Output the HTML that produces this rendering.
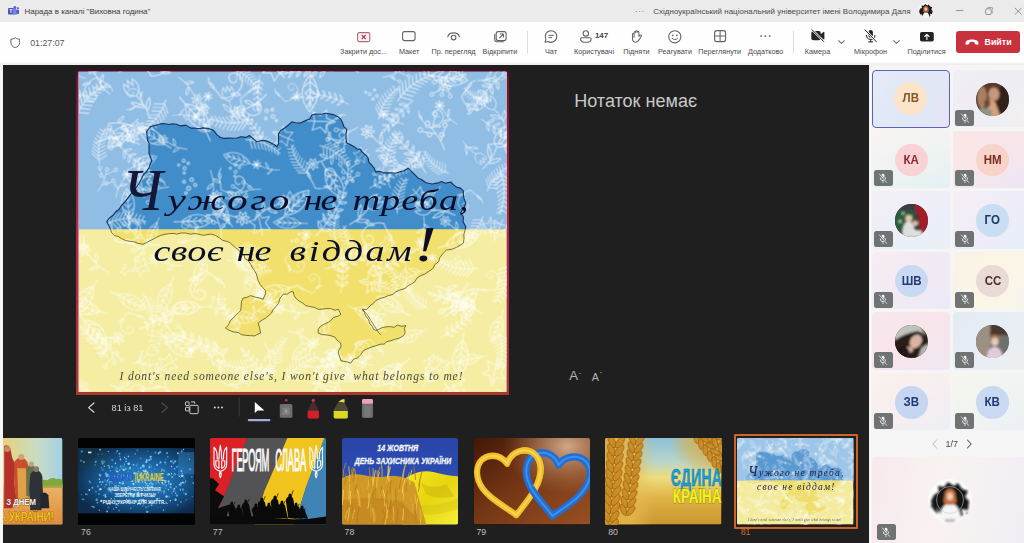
<!DOCTYPE html>
<html lang="uk">
<head>
<meta charset="utf-8">
<title>Нарада в каналі "Виховна година"</title>
<style>
*{box-sizing:border-box;margin:0;padding:0}
html,body{width:1024px;height:543px;overflow:hidden;background:#f5f5f5;font-family:"Liberation Sans",sans-serif;}
.abs{position:absolute}
#titlebar{z-index:2;position:absolute;left:0;top:0;width:1024px;height:21.500px;background:#ebebeb;color:#3b3b3b;font-size:7.95px;}
#titlebar .t{position:absolute;top:1px;line-height:21px;white-space:nowrap}
#toolbar{position:absolute;left:0;top:21px;width:1024px;height:44px;background:linear-gradient(#f3f3f3 0,#fefefe 1.500px,#fefefe 40.500px,#ececec 44px);}
.tb{position:absolute;top:0;height:44px;}
.tb .lbl{position:absolute;top:25.5px;left:50%;transform:translateX(-50%);font-size:7.25px;color:#4a4a4a;white-space:nowrap;line-height:10px}
.tb svg{position:absolute;overflow:visible}
.sep{position:absolute;top:9.5px;width:1px;height:22px;background:#dcdcdc}
#stage{position:absolute;left:3px;top:65px;width:865.5px;height:478px;background:#1f1f1f;overflow:hidden}
#side{position:absolute;left:868.5px;top:65px;width:155.5px;height:478px;background:#f5f5f5;overflow:hidden}
.tile{position:absolute;width:78.2px;height:57.400px;border-radius:4px;overflow:hidden}
.av{position:absolute;width:32.600px;height:32.600px;border-radius:50%;left:23.400px;top:13px;font-size:12.400px;font-weight:bold;text-align:center;line-height:33.400px;overflow:hidden}
.av span{display:inline-block;transform:scaleX(.93)}
.mic{position:absolute;left:2.600px;top:39.800px;width:18.500px;height:16px;border-radius:2.500px;background:#6f7373}
.mic svg{position:absolute;left:4.200px;top:2.800px}
.thumb{position:absolute;top:373.3px;width:116.4px;height:86.4px;border-radius:2px;overflow:hidden;background:#000}
.tn{position:absolute;top:461.900px;font-size:8.800px;color:#bdbdbd;line-height:10px}
</style>
</head>
<body>
<!-- TITLE BAR -->
<div id="titlebar">
  <svg class="abs" style="left:7.600px;top:5.600px" width="11.500" height="10.500" viewBox="0 0 12 11"><rect x="0" y="2.2" width="6.2" height="6.6" rx="1" fill="#4b53bc"/><rect x="5" y="3.2" width="4.4" height="6" rx="1.2" fill="#7b83eb"/><circle cx="7.2" cy="1.7" r="1.6" fill="#5b63d3"/><rect x="8.8" y="3.8" width="3" height="4.6" rx="1.2" fill="#5059c9"/><circle cx="10.4" cy="2.4" r="1.1" fill="#5059c9"/><text x="3.100" y="7.800" font-family="'Liberation Sans',sans-serif" font-weight="bold" font-size="5.500" fill="#fff" text-anchor="middle">T</text></svg>
  <span class="t" style="left:24.5px">Нарада в каналі "Виховна година"</span>
  <span class="t" style="left:635px;letter-spacing:.6px;color:#555">···</span>
  <span class="t" style="left:653.3px;letter-spacing:.035px;color:#4a4a4a">Східноукраїнський національний університет імені Володимира Даля</span>
  <div class="abs" style="left:917.600px;top:2.600px;width:15.800px;height:15.800px;border-radius:50%;overflow:hidden;background:#f4f4f4"><svg width="15.800" height="15.800" viewBox="0 0 44 44" style="display:block"><path d="M6 16L3 22L5 30L10 35L9 28L14 38L18 41L16 34L22 30L30 36L27 41L35 36L33 30L40 31L41 22L37 18L40 12L34 10L30 4L26 7L20 3L16 8L10 7L11 13Z" fill="#1c1a1a"/><path d="M13 42Q13 26 22 25Q31 26 32 42Z" fill="#f6f6f6"/><path d="M15 12Q22 3 29 12L30 24L25 27H19L14 24Z" fill="#b05a34"/><ellipse cx="22" cy="17" rx="4" ry="5" fill="#efc8b0"/></svg></div>
  <svg class="abs" style="left:955.700px;top:9.800px" width="8" height="1.200" viewBox="0 0 8 1.200"><rect width="7.400" height=".9" fill="#8a8a8a"/></svg>
  <svg class="abs" style="left:984.600px;top:6.500px" width="8.600" height="8.600" viewBox="0 0 7 7"><rect x=".5" y="1.500" width="4.600" height="4.600" rx="1" fill="none" stroke="#8a8a8a" stroke-width=".75"/><path d="M1.800 1.200 Q2 .5 2.800 .5 H5.300 Q6.500 .5 6.500 1.700 V4 Q6.500 4.800 5.800 5" fill="none" stroke="#8a8a8a" stroke-width=".75"/></svg>
  <svg class="abs" style="left:1014.200px;top:6.500px" width="8.400" height="8.400" viewBox="0 0 8 8"><path d="M.8 .8 L7.200 7.200 M7.200 .8 L.8 7.200" stroke="#8a8a8a" stroke-width=".9"/></svg>
</div>

<!-- TOOLBAR -->
<div id="toolbar">
  <svg class="abs" style="left:9.600px;top:15.600px" width="10.600" height="11.400" viewBox="0 0 12 13"><path d="M6 .8 C4.4 2 2.8 2.5 1 2.6 V6.2 C1 9.2 3 11.2 6 12.2 C9 11.2 11 9.2 11 6.200 V2.6 C9.2 2.5 7.600 2 6 .8 Z" fill="none" stroke="#5a5a5a" stroke-width="1.1" stroke-linejoin="round"/></svg>
  <span class="abs" style="left:30.200px;top:15.700px;font-size:8.800px;color:#5a5a5a;line-height:12px">01:27:07</span>
  <!-- Close doc -->
  <div class="tb" style="left:340px;width:47px"><svg style="left:17px;top:10.6px" width="13.4" height="10.2" viewBox="0 0 13.4 10.2"><rect x=".6" y=".6" width="12.2" height="9" rx="1.6" fill="#fbeff1" stroke="#b46a7a" stroke-width="1.1"/><path d="M4.700 3 L8.700 7.200 M8.700 3 L4.700 7.200" stroke="#8e4254" stroke-width="1.100"/></svg><span class="lbl">Закрити дос...</span></div>
  <!-- Layout -->
  <div class="tb" style="left:389.200px;width:40px"><svg style="left:13.1px;top:10.3px" width="13.700" height="10.2" viewBox="0 0 13.7 10.2"><rect x=".6" y=".6" width="12.5" height="9" rx="2" fill="none" stroke="#636363" stroke-width="1.1"/></svg><span class="lbl">Макет</span></div>
  <!-- Private view -->
  <div class="tb" style="left:431.500px;width:44px"><svg style="left:15.3px;top:11px" width="13.200" height="8.6" viewBox="0 0 13.2 8.6"><path d="M.8 4.600 C2.200 -.4 11 -.4 12.4 4.600" fill="none" stroke="#636363" stroke-width="1.1" stroke-linecap="round"/><circle cx="6.6" cy="5.600" r="2.300" fill="none" stroke="#636363" stroke-width="1.1"/></svg><span class="lbl">Пр. перегляд</span></div>
  <!-- Pop out -->
  <div class="tb" style="left:481px;width:38px"><svg style="left:12.700px;top:9.700px" width="12.700" height="11.400" viewBox="0 0 12.7 11.4"><rect x="2.2" y=".6" width="9.9" height="9" rx="2" fill="none" stroke="#636363" stroke-width="1.1"/><path d="M.7 3.200 V8.6 Q.7 10.800 2.9 10.800 H9.400" fill="none" stroke="#636363" stroke-width="1.1" stroke-linecap="round"/><path d="M5.600 6.900 L9.200 3.300 M6.400 3.100 H9.400 V6.100" fill="none" stroke="#636363" stroke-width="1.050" stroke-linecap="round" stroke-linejoin="round"/></svg><span class="lbl">Відкріпити</span></div>
  <div class="sep" style="left:526.5px"></div>
  <!-- Chat -->
  <div class="tb" style="left:536px;width:30px"><svg style="left:8.400px;top:9px" width="13.600" height="13" viewBox="0 0 13.6 13"><path d="M7 .7 A5.800 5.800 0 1 1 4.100 11.5 L1 12.300 L1.900 9.300 A5.800 5.800 0 0 1 7 .7 Z" fill="none" stroke="#636363" stroke-width="1.100" stroke-linejoin="round"/><path d="M4.800 5.300 H9.300 M4.800 7.600 H7.600" stroke="#636363" stroke-width="1" stroke-linecap="round"/></svg><span class="lbl">Чат</span></div>
  <!-- People -->
  <div class="tb" style="left:573px;width:42px"><svg style="left:6.600px;top:9px" width="11.700" height="13" viewBox="0 0 11.7 13"><circle cx="5.850" cy="3.400" r="2.700" fill="none" stroke="#636363" stroke-width="1.100"/><path d="M1.700 7.800 H10 Q11.100 7.800 11.100 8.900 C11.100 11.200 8.800 12.300 5.850 12.300 C2.900 12.300 .6 11.200 .6 8.900 Q.6 7.800 1.700 7.800 Z" fill="none" stroke="#636363" stroke-width="1.100"/></svg><span class="abs" style="left:22px;top:10px;font-size:8.100px;font-weight:bold;color:#424242;line-height:10px;letter-spacing:-.15px">147</span><span class="lbl">Користувачі</span></div>
  <!-- Raise -->
  <div class="tb" style="left:621.400px;width:30px"><svg style="left:9.600px;top:9px" width="11" height="13" viewBox="0 0 11 13"><path d="M3.100 7.300 V2.600 Q3.100 1.700 3.900 1.700 Q4.700 1.700 4.700 2.600 V1.600 Q4.700 .7 5.500 .7 Q6.300 .7 6.300 1.600 V2.300 Q6.300 1.500 7.100 1.500 Q7.900 1.500 7.900 2.400 V6.300 L9 5.200 Q9.700 4.600 10.200 5.200 Q10.600 5.700 10.100 6.400 L8.300 9.600 Q6.900 12.300 4.900 12.300 Q1.500 12.300 1.500 8.800 V4.300 Q1.500 3.500 2.300 3.500 Q3.100 3.500 3.100 4.300" fill="none" stroke="#636363" stroke-width="1.050" stroke-linejoin="round" stroke-linecap="round"/></svg><span class="lbl">Підняти</span></div>
  <!-- React -->
  <div class="tb" style="left:658px;width:34px"><svg style="left:10.400px;top:9px" width="13.600" height="13.600" viewBox="0 0 13.6 13.6"><circle cx="6.800" cy="6.800" r="6.100" fill="none" stroke="#636363" stroke-width="1.100"/><circle cx="4.700" cy="5.300" r=".85" fill="#636363"/><circle cx="8.900" cy="5.300" r=".85" fill="#636363"/><path d="M4 8.300 Q6.800 11.200 9.600 8.300" fill="none" stroke="#636363" stroke-width="1" stroke-linecap="round"/></svg><span class="lbl">Реагувати</span></div>
  <!-- View -->
  <div class="tb" style="left:698px;width:43.400px"><svg style="left:15.800px;top:9px" width="12.200" height="12.200" viewBox="0 0 12.2 12.2"><rect x=".6" y=".6" width="11" height="11" rx="2.300" fill="none" stroke="#636363" stroke-width="1.100"/><path d="M6.100 .6 V11.600 M.6 6.100 H11.600" stroke="#636363" stroke-width="1.050"/></svg><span class="lbl">Переглянути</span></div>
  <!-- More -->
  <div class="tb" style="left:747.700px;width:36px"><svg style="left:12.600px;top:14px" width="10.800" height="2.200" viewBox="0 0 10.8 2.2"><circle cx="1.100" cy="1.100" r=".95" fill="#636363"/><circle cx="5.400" cy="1.100" r=".95" fill="#636363"/><circle cx="9.700" cy="1.100" r=".95" fill="#636363"/></svg><span class="lbl">Додатково</span></div>
  <div class="sep" style="left:793px"></div>
  <!-- Camera -->
  <div class="tb" style="left:804.500px;width:26px"><svg style="left:6.200px;top:8.400px" width="14.200" height="13.200" viewBox="0 0 14.2 13.2"><path d="M2.400 2.100 H7.700 Q9.800 2.100 9.800 4.200 V5.200 L12.400 3 Q13.400 2.400 13.400 3.600 V9.800 Q13.400 11 12.400 10.400 L9.800 8.200 V9.200 Q9.800 11.300 7.700 11.300 H2.400 Q.3 11.300 .3 9.200 V4.200 Q.3 2.100 2.400 2.100 Z" fill="#242424"/><path d="M1.200 .8 L12.800 12.600" stroke="#fdfdfd" stroke-width="2.200"/><path d="M1.200 .8 L12.800 12.600" stroke="#242424" stroke-width="1" stroke-linecap="round"/></svg><span class="lbl">Камера</span></div>
  <svg class="abs" style="left:838.400px;top:19.100px" width="7" height="4" viewBox="0 0 7 4"><path d="M.4 .4 L3.500 3.400 L6.600 .4" fill="none" stroke="#707070" stroke-width="1.050"/></svg>
  <!-- Mic -->
  <div class="tb" style="left:853px;width:35px"><svg style="left:11.200px;top:8.400px" width="13.400" height="13.800" viewBox="0 0 13.4 13.800"><rect x="4.500" y="1" width="4.400" height="7.600" rx="2.200" fill="#242424"/><path d="M2.500 6.400 Q2.500 10.400 6.700 10.400 Q10.900 10.400 10.900 6.400 M6.700 10.400 V12.900 M4.700 12.900 H8.700" fill="none" stroke="#242424" stroke-width="1" stroke-linecap="round"/><path d="M1 .8 L12.400 12.800" stroke="#fdfdfd" stroke-width="2.200"/><path d="M1 .8 L12.400 12.800" stroke="#242424" stroke-width="1" stroke-linecap="round"/></svg><span class="lbl">Мікрофон</span></div>
  <svg class="abs" style="left:892.600px;top:19.100px" width="7" height="4" viewBox="0 0 7 4"><path d="M.4 .4 L3.500 3.400 L6.600 .4" fill="none" stroke="#707070" stroke-width="1.050"/></svg>
  <!-- Share -->
  <div class="tb" style="left:907.500px;width:38px"><svg style="left:12.200px;top:10.600px" width="13.800" height="9.600" viewBox="0 0 13.8 9.6"><rect x="0" y="0" width="13.800" height="9.600" rx="1.800" fill="#242424"/><path d="M6.900 7.400 V2.600 M4.800 4.500 L6.900 2.400 L9 4.500" fill="none" stroke="#fff" stroke-width="1.100" stroke-linecap="round" stroke-linejoin="round"/></svg><span class="lbl">Поділитися</span></div>
  <!-- Leave -->
  <div class="abs" style="left:955.800px;top:10.300px;width:64px;height:21.400px;border-radius:3px;background:#c9313d"><svg class="abs" style="left:9.600px;top:7.400px" width="14" height="6.400" viewBox="0 0 14 6.4"><path d="M.5 4 C.5 -.6 13.500 -.6 13.500 4 V5 Q13.500 6 12.600 5.800 L10.400 5.300 Q9.700 5.100 9.700 4.400 V3.400 C8 2.700 6 2.700 4.300 3.400 V4.400 Q4.300 5.100 3.600 5.300 L1.400 5.800 Q.5 6 .5 5 Z" fill="#fff"/></svg><span class="abs" style="left:28.700px;top:5.400px;font-size:8.900px;font-weight:bold;color:#fff;line-height:11px">Вийти</span></div>
</div>

<!-- STAGE -->
<div id="stage">
  <!--SLIDE-START-->
<svg class="abs" style="left:72.5px;top:3.5px" width="433.5" height="326.0" viewBox="75.5 68.5 433.5 326.0" font-family="'Liberation Serif','DejaVu Serif',serif">
<defs><path id="m0" d="M0 0Q3 -20 0 -40M0.9 -7.1Q-0.9 -11.7 -5.7 -12.4Q-4 -7.8 0.9 -7.1M0.9 -7.1Q5.8 -7.8 7.5 -12.4Q2.6 -11.7 0.9 -7.1M1.4 -14.3Q-0.2 -18.6 -4.8 -19.2Q-3.2 -14.9 1.4 -14.3M1.4 -14.3Q5.9 -14.9 7.5 -19.2Q3 -18.6 1.4 -14.3M1.5 -21.4Q-0 -25.4 -4.2 -26Q-2.7 -22 1.5 -21.4M1.5 -21.4Q5.7 -22 7.2 -26Q3 -25.4 1.5 -21.4M1.2 -28.6Q-0.2 -32.3 -4.1 -32.8Q-2.7 -29.1 1.2 -28.6M1.2 -28.6Q5.1 -29.1 6.5 -32.8Q2.6 -32.3 1.2 -28.6M0.6 -35.7Q-0.7 -39.1 -4.3 -39.6Q-3 -36.2 0.6 -35.7M0.6 -35.7Q4.2 -36.2 5.4 -39.6Q1.8 -39.1 0.6 -35.7M0 -40Q2.1 -43.5 0 -47Q-2.1 -43.5 0 -40"/><path id="m1" d="M0 0Q12.6 -15 0 -30Q-12.6 -15 0 0M0 0V-27M0 -5.5L4.3 -9.5M0 -5.5L-4.3 -9.5M0 -11L3.6 -15M0 -11L-3.6 -15M0 -16.5L2.9 -20.5M0 -16.5L-2.9 -20.5M0 -22L2.2 -26M0 -22L-2.2 -26M0 0V7"/><path id="m2" d="M0 0Q-4 -14 0 -26M0 -30Q3 -27.6 6 -30Q3 -32.4 0 -30M0 -30Q-0 -26.2 3.7 -25.3Q3.7 -29.2 0 -30M0 -30Q-3 -27.6 -1.3 -24.2Q1.7 -26.5 0 -30M0 -30Q-3.7 -30.9 -5.4 -27.4Q-1.7 -26.5 0 -30M0 -30Q-1.7 -33.5 -5.4 -32.6Q-3.7 -29.1 0 -30M0 -30Q1.7 -33.5 -1.3 -35.8Q-3 -32.4 0 -30M0 -30Q3.7 -30.8 3.7 -34.7Q-0 -33.8 0 -30M-1.3 -30a1.3 1.3 0 1 0 2.6 0a1.3 1.3 0 1 0 -2.6 0M-1.5 -9Q-3.8 -13.7 -9.1 -13.9Q-6.7 -9.2 -1.5 -9M-1.5 -14Q3.7 -14.7 5.5 -19.6Q0.3 -18.9 -1.5 -14"/><path id="m3" d="M0 0Q2 -12 -2 -24M1 -8L9 -16M0 -15L-9 -22M-1 -20L6 -28M-3.8 -26a1.8 1.8 0 1 0 3.6 0a1.8 1.8 0 1 0 -3.6 0M8.2 -18a1.8 1.8 0 1 0 3.6 0a1.8 1.8 0 1 0 -3.6 0M-11.8 -24a1.8 1.8 0 1 0 3.6 0a1.8 1.8 0 1 0 -3.6 0M5.2 -30a1.8 1.8 0 1 0 3.6 0a1.8 1.8 0 1 0 -3.6 0M2.2 -12a1.8 1.8 0 1 0 3.6 0a1.8 1.8 0 1 0 -3.6 0M-6.8 -17a1.8 1.8 0 1 0 3.6 0a1.8 1.8 0 1 0 -3.6 0"/><path id="m4" d="M0 0Q-6 -18 2 -36M-1.1 -3.6l7.5 -5.3M-1.1 -3.6l-7.5 -5.3M-1.8 -7.2l7 -4.9M-1.8 -7.2l-7 -4.9M-2.3 -10.8l6.6 -4.6M-2.3 -10.8l-6.6 -4.6M-2.6 -14.4l6.1 -4.3M-2.6 -14.4l-6.1 -4.3M-2.5 -18l5.6 -3.9M-2.5 -18l-5.6 -3.9M-2.2 -21.6l5.1 -3.6M-2.2 -21.6l-5.1 -3.6M-1.5 -25.2l4.6 -3.2M-1.5 -25.2l-4.6 -3.2M-0.6 -28.8l4.2 -2.9M-0.6 -28.8l-4.2 -2.9M0.5 -32.4l3.7 -2.6M0.5 -32.4l-3.7 -2.6"/><path id="m5" d="M0 0C10 -4 16 -16 8 -22C2 -26 -4 -20 1 -16C4 -14 7 -16 6 -18M0 0C-6 -6 -14 -4 -16 -12M6 -6Q10.5 -4.9 13.6 -8.4Q9.1 -9.5 6 -6M-8 -5Q-9.9 -8.6 -14 -8.6Q-12.1 -5 -8 -5"/><path id="m6" d="M0 0Q3 -12 0 -22M0 -22C-7 -24 -7 -32 -4 -36L-2 -31L0 -37L2 -31L4 -36C7 -32 7 -24 0 -22M1 -6Q7.2 -8.7 8.7 -15.2Q2.6 -12.5 1 -6M1 -10Q-0.6 -16.5 -6.7 -19.2Q-5.2 -12.7 1 -10"/><path id="m7" d="M0 0V-6L-8 -4L-5 -11L-10 -16L-3 -16L0 -24L3 -16L10 -16L5 -11L8 -4L0 -6M0 -6V-20"/><path id="m8" d="M-1.5 0a1.5 1.5 0 1 0 3 0a1.5 1.5 0 1 0 -3 0M3.8 -3a1.2 1.2 0 1 0 2.4 0a1.2 1.2 0 1 0 -2.4 0M0.6 -7a1.4 1.4 0 1 0 2.8 0a1.4 1.4 0 1 0 -2.8 0M-5.1 -5a1.1 1.1 0 1 0 2.2 0a1.1 1.1 0 1 0 -2.2 0M-3 4a1 1 0 1 0 2 0a1 1 0 1 0 -2 0"/><path id="mapd" d="M146.1 131.3L147.9 128.8L150.0 126.0L154.7 124.9L157.5 124.2L161.2 123.0L164.3 123.2L169.0 124.0L171.6 123.2L176.2 123.8L179.7 125.4L185.4 124.6L190.4 127.6L193.7 127.5L198.7 128.3L202.3 127.4L207.9 128.0L212.5 129.5L214.3 131.4L216.5 134.4L220.0 137.0L223.9 137.9L228.2 137.6L232.2 137.7L236.3 137.5L240.4 136.2L245.7 136.9L248.8 135.0L253.3 138.6L256.3 141.3L259.3 140.5L262.6 139.9L266.4 140.6L270.3 142.3L273.8 144.2L276.4 146.3L278.2 142.9L278.0 138.0L278.0 133.4L280.2 130.0L284.8 127.0L288.7 124.0L291.4 121.3L294.8 122.2L300.0 122.6L305.1 120.0L309.0 118.5L311.5 114.5L315.1 113.5L321.5 113.8L325.0 112.6L328.4 113.3L332.5 114.1L337.6 116.3L340.4 118.7L342.1 122.4L343.4 126.2L346.3 128.8L345.5 133.7L345.5 137.8L346.3 142.6L349.1 143.7L354.2 146.4L356.1 148.2L360.0 148.9L361.9 151.6L365.8 155.1L367.6 157.7L368.6 162.2L370.7 164.0L373.7 167.6L375.0 171.4L378.6 170.7L382.2 172.1L386.6 172.4L390.9 172.3L395.2 172.7L400.4 171.0L403.7 170.2L407.7 167.7L410.3 170.3L415.3 175.1L417.7 177.7L420.5 178.7L425.0 182.0L427.8 182.7L431.6 183.5L437.6 182.4L441.1 181.1L444.8 182.8L450.3 181.5L452.8 184.1L456.0 186.6L459.9 187.6L462.8 190.2L462.9 194.9L463.5 197.9L465.3 202.7L463.8 206.8L462.2 208.8L460.3 212.6L462.9 216.5L462.6 221.2L465.3 226.3L464.6 229.4L463.3 234.2L463.6 237.7L462.8 242.6L458.5 245.5L455.9 246.9L451.2 248.8L446.0 249.6L442.8 252.6L439.2 257.3L438.2 261.2L434.2 264.2L432.8 267.7L428.6 270.7L424.0 273.8L420.2 275.2L416.2 277.8L414.6 281.0L411.6 283.0L408.0 285.0L404.4 288.0L399.3 289.6L395.4 291.3L392.3 293.9L387.2 295.4L384.2 296.7L379.7 298.0L375.4 300.0L373.0 302.8L369.4 305.4L367.8 307.6L365.8 309.0L361.6 308.8L363.8 311.7L365.0 315.0L367.9 318.8L369.5 323.1L372.0 326.0L372.8 328.6L375.4 330.1L377.7 329.1L382.0 327.0L385.4 326.4L389.8 326.1L393.7 326.8L396.9 324.5L401.0 325.8L405.4 325.1L403.9 327.7L404.6 332.2L402.9 335.2L398.6 337.7L394.2 338.9L390.4 340.2L386.0 341.3L383.6 343.6L380.0 343.7L375.4 345.2L371.4 346.5L366.2 348.5L362.8 350.2L360.4 354.1L357.0 357.4L352.9 358.8L350.3 362.7L346.9 361.4L343.0 360.8L340.3 360.2L339.3 356.4L337.8 352.7L338.2 350.1L340.5 345.9L340.3 342.7L336.0 339.2L334.5 336.7L330.3 335.2L326.6 334.5L321.5 334.1L317.7 332.6L317.7 328.9L319.8 325.9L323.9 323.5L327.9 321.7L330.3 320.1L332.8 317.0L337.3 315.8L340.3 313.9L339.3 311.7L337.8 308.8L334.5 309.8L330.2 308.1L325.7 308.1L320.6 308.7L317.7 308.8L314.0 306.9L308.9 306.0L305.2 305.1L302.3 302.6L298.8 300.7L295.2 297.6L293.7 295.1L292.7 291.3L290.3 291.2L287.0 293.5L282.7 293.8L279.4 297.9L278.0 303.0L275.2 306.3L272.4 309.3L271.0 312.6L268.6 314.7L265.1 317.6L261.7 319.5L257.6 322.6L258.9 326.6L259.6 329.7L260.1 332.6L256.1 334.3L254.5 335.4L250.1 335.2L245.8 334.9L241.0 334.2L237.8 332.0L232.6 331.4L227.9 329.4L225.0 327.6L227.6 324.9L230.0 319.9L232.6 317.6L235.8 314.1L238.3 311.9L240.1 310.1L240.6 306.6L241.0 301.0L242.6 297.6L246.4 296.8L250.1 295.1L255.0 296.7L259.4 297.6L262.6 298.8L264.8 293.5L265.1 290.1L262.0 286.8L259.6 283.9L257.6 280.0L256.7 276.7L255.9 273.5L253.9 270.0L251.4 266.4L250.5 264.2L247.6 260.0L244.4 258.1L243.6 254.7L240.0 252.0L237.7 249.0L235.1 247.3L232.5 245.0L229.2 242.0L226.5 241.0L221.8 239.7L218.6 237.0L215.0 235.0L211.1 233.7L206.5 234.1L203.1 234.9L197.3 233.5L192.8 233.1L190.0 233.7L185.0 232.5L180.8 232.5L176.0 233.6L173.4 232.9L168.9 233.1L163.5 234.0L160.0 235.0L156.0 236.8L150.9 239.6L146.0 242.1L142.5 243.8L137.3 242.8L133.2 241.2L129.4 240.8L125.0 240.0L121.0 238.1L117.6 235.9L113.8 235.0L111.2 232.2L110.0 228.8L108.4 225.1L106.2 221.2L108.6 217.7L112.5 214.8L115.6 210.8L118.4 208.9L121.0 205.0L124.9 200.9L126.6 198.6L130.0 194.0L132.2 191.3L136.6 185.7L138.6 182.7L140.5 179.3L143.0 174.0L146.0 171.0L148.5 167.2L150.1 162.8L151.2 160.0L150.1 157.1L148.4 152.7L148.6 150.0L148.5 147.6L148.6 142.5L147.0 140.0L146.6 136.2Z"/><clipPath id="cpi"><rect x="78.6" y="71.2" width="427.0" height="320.2"/></clipPath>
<clipPath id="cpt"><rect x="78.6" y="71.2" width="427.0" height="157.7"/></clipPath>
<clipPath id="cpb"><rect x="78.6" y="228.9" width="427.0" height="162.5"/></clipPath>
<linearGradient id="brd" x1="0" y1="0" x2="0" y2="1"><stop offset="0" stop-color="#3c0e20"/><stop offset=".03" stop-color="#6a1836"/><stop offset=".5" stop-color="#b02848"/><stop offset="1" stop-color="#a8382c"/></linearGradient></defs>
<rect x="75.5" y="68.5" width="433.5" height="326.0" fill="url(#brd)"/>
<rect x="77.7" y="71.2" width="428.8" height="320.2" fill="#d7a2b4"/>
<rect x="78.6" y="71.2" width="427.0" height="157.7" fill="#8fbde4"/>
<rect x="78.6" y="228.9" width="427.0" height="162.5" fill="#f5eea2"/>
<use href="#mapd" fill="#408dc9" clip-path="url(#cpt)"/>
<use href="#mapd" fill="#f1e16c" clip-path="url(#cpb)"/>
<g clip-path="url(#cpi)"><g id="flor" fill="none" stroke="#fff" stroke-width="1.05" stroke-opacity=".6" stroke-linecap="round" stroke-linejoin="round" style="filter:blur(.35px)"><use href="#m1" transform="translate(78.6 75.8)rotate(289)scale(0.99)"/><use href="#m5" transform="translate(96.9 76.9)rotate(185)scale(1.03)"/><use href="#m1" transform="translate(123.7 68.8)rotate(62)scale(0.83)"/><use href="#m5" transform="translate(150.6 75.6)rotate(22)scale(1.23)"/><use href="#m2" transform="translate(178.1 76.9)rotate(140)scale(0.96)"/><use href="#m2" transform="translate(201.6 69.1)rotate(4)scale(1.10)"/><use href="#m4" transform="translate(233.4 68.7)rotate(129)scale(0.94)"/><use href="#m0" transform="translate(259.5 74.7)rotate(184)scale(0.76)"/><use href="#m7" transform="translate(284.1 77.4)rotate(315)scale(1.20)"/><use href="#m1" transform="translate(309.8 74.2)rotate(181)scale(1.24)"/><use href="#m0" transform="translate(332.9 69.8)rotate(267)scale(1.14)"/><use href="#m2" transform="translate(358 71.9)rotate(316)scale(1.10)"/><use href="#m3" transform="translate(382.3 76.9)rotate(74)scale(0.84)"/><use href="#m0" transform="translate(407.8 70.4)rotate(3)scale(0.93)"/><use href="#m1" transform="translate(430.5 74.9)rotate(98)scale(1.23)"/><use href="#m3" transform="translate(450.8 69.2)rotate(205)scale(1.02)"/><use href="#m6" transform="translate(477.1 80.2)rotate(76)scale(0.81)"/><use href="#m0" transform="translate(502.1 74.2)rotate(221)scale(1.12)"/><use href="#m0" transform="translate(87.7 95.8)rotate(274)scale(1.07)"/><use href="#m2" transform="translate(109.3 93.8)rotate(326)scale(1.03)"/><use href="#m5" transform="translate(141.2 103.7)rotate(304)scale(0.80)"/><use href="#m4" transform="translate(165.3 99.2)rotate(215)scale(1.13)"/><use href="#m1" transform="translate(184.7 103.2)rotate(138)scale(1.24)"/><use href="#m5" transform="translate(221.1 97.8)rotate(21)scale(1.22)"/><use href="#m5" transform="translate(240 97.6)rotate(112)scale(1.02)"/><use href="#m2" transform="translate(265.9 94)rotate(238)scale(1.12)"/><use href="#m5" transform="translate(284.5 101)rotate(15)scale(0.83)"/><use href="#m2" transform="translate(319.7 95.7)rotate(269)scale(0.78)"/><use href="#m0" transform="translate(347.9 103.4)rotate(287)scale(0.86)"/><use href="#m8" transform="translate(369.2 93.7)rotate(87)scale(1.01)"/><use href="#m4" transform="translate(397.2 100.3)rotate(51)scale(1.23)"/><use href="#m0" transform="translate(412.5 100.1)rotate(224)scale(0.98)"/><use href="#m4" transform="translate(437 90.9)rotate(55)scale(0.93)"/><use href="#m5" transform="translate(461.1 96)rotate(94)scale(1.04)"/><use href="#m4" transform="translate(490 101.1)rotate(293)scale(0.82)"/><use href="#m4" transform="translate(75.7 116)rotate(40)scale(1.20)"/><use href="#m2" transform="translate(107.6 122.9)rotate(98)scale(1.05)"/><use href="#m1" transform="translate(131.8 124)rotate(227)scale(1.13)"/><use href="#m6" transform="translate(149.3 117.7)rotate(329)scale(1.19)"/><use href="#m2" transform="translate(172.2 115.1)rotate(93)scale(0.76)"/><use href="#m2" transform="translate(197.1 117.3)rotate(26)scale(0.79)"/><use href="#m6" transform="translate(231.1 121.9)rotate(353)scale(0.99)"/><use href="#m4" transform="translate(251.6 118.9)rotate(268)scale(1.17)"/><use href="#m8" transform="translate(272.6 115.9)rotate(295)scale(1.17)"/><use href="#m7" transform="translate(307.4 120.4)rotate(92)scale(1.15)"/><use href="#m5" transform="translate(326.8 123.4)rotate(117)scale(1.02)"/><use href="#m3" transform="translate(357 127.1)rotate(235)scale(1.04)"/><use href="#m4" transform="translate(378.1 118.7)rotate(29)scale(1.03)"/><use href="#m2" transform="translate(403.4 123.8)rotate(296)scale(0.75)"/><use href="#m5" transform="translate(425.9 126.9)rotate(29)scale(0.90)"/><use href="#m2" transform="translate(456.7 123.9)rotate(317)scale(0.86)"/><use href="#m0" transform="translate(480.8 118.8)rotate(116)scale(0.97)"/><use href="#m6" transform="translate(504.9 126.8)rotate(328)scale(0.97)"/><use href="#m2" transform="translate(95.3 142.5)rotate(79)scale(1.23)"/><use href="#m0" transform="translate(119.3 145.4)rotate(130)scale(0.93)"/><use href="#m3" transform="translate(139.2 143.7)rotate(286)scale(1.12)"/><use href="#m1" transform="translate(164.3 143.7)rotate(301)scale(1.03)"/><use href="#m2" transform="translate(186.6 148.8)rotate(292)scale(0.86)"/><use href="#m2" transform="translate(209.9 140.4)rotate(347)scale(1.08)"/><use href="#m4" transform="translate(245.4 139.1)rotate(109)scale(1.02)"/><use href="#m0" transform="translate(263.8 142)rotate(323)scale(0.79)"/><use href="#m7" transform="translate(293 140.2)rotate(293)scale(0.96)"/><use href="#m4" transform="translate(319.1 145)rotate(121)scale(0.98)"/><use href="#m2" transform="translate(339 149.5)rotate(242)scale(1.00)"/><use href="#m7" transform="translate(366.6 148.3)rotate(222)scale(0.77)"/><use href="#m2" transform="translate(394.7 152)rotate(307)scale(1.15)"/><use href="#m4" transform="translate(420.8 150.6)rotate(230)scale(1.01)"/><use href="#m3" transform="translate(444 149.4)rotate(332)scale(1.21)"/><use href="#m6" transform="translate(462.5 140.5)rotate(135)scale(0.83)"/><use href="#m2" transform="translate(487 144.1)rotate(98)scale(1.19)"/><use href="#m2" transform="translate(78.2 172.4)rotate(233)scale(1.14)"/><use href="#m4" transform="translate(99.1 163.1)rotate(6)scale(0.99)"/><use href="#m1" transform="translate(132.8 166.6)rotate(66)scale(0.86)"/><use href="#m5" transform="translate(149.9 172.2)rotate(183)scale(0.97)"/><use href="#m8" transform="translate(184.1 167.8)rotate(337)scale(1.06)"/><use href="#m2" transform="translate(209.8 169.9)rotate(174)scale(0.95)"/><use href="#m8" transform="translate(235 171.4)rotate(344)scale(0.99)"/><use href="#m1" transform="translate(249.7 162.9)rotate(288)scale(0.94)"/><use href="#m2" transform="translate(279 169.4)rotate(283)scale(0.78)"/><use href="#m4" transform="translate(309.5 174.7)rotate(325)scale(0.98)"/><use href="#m1" transform="translate(325.1 168.1)rotate(149)scale(1.14)"/><use href="#m8" transform="translate(348.6 174.9)rotate(185)scale(1.07)"/><use href="#m4" transform="translate(385.5 165.9)rotate(19)scale(1.04)"/><use href="#m1" transform="translate(399.1 165.1)rotate(295)scale(0.79)"/><use href="#m0" transform="translate(425.4 172.2)rotate(320)scale(1.10)"/><use href="#m4" transform="translate(447.8 172.7)rotate(308)scale(0.90)"/><use href="#m6" transform="translate(482.7 168)rotate(32)scale(1.16)"/><use href="#m4" transform="translate(499.5 169.8)rotate(177)scale(1.22)"/><use href="#m3" transform="translate(97.6 190.6)rotate(27)scale(0.90)"/><use href="#m2" transform="translate(115.6 196.2)rotate(26)scale(0.82)"/><use href="#m7" transform="translate(143.4 195.7)rotate(348)scale(1.16)"/><use href="#m3" transform="translate(168.3 186.4)rotate(256)scale(0.99)"/><use href="#m8" transform="translate(188.2 187.8)rotate(3)scale(1.25)"/><use href="#m5" transform="translate(220.3 189.1)rotate(54)scale(1.06)"/><use href="#m2" transform="translate(247.2 196.7)rotate(271)scale(1.03)"/><use href="#m3" transform="translate(260.3 188.8)rotate(263)scale(0.91)"/><use href="#m7" transform="translate(297.3 194.1)rotate(230)scale(0.97)"/><use href="#m5" transform="translate(314.5 187.6)rotate(33)scale(1.09)"/><use href="#m3" transform="translate(344 188.7)rotate(13)scale(0.98)"/><use href="#m0" transform="translate(369 187.6)rotate(56)scale(0.81)"/><use href="#m3" transform="translate(389.8 187.2)rotate(333)scale(0.82)"/><use href="#m7" transform="translate(412 188.3)rotate(138)scale(0.92)"/><use href="#m3" transform="translate(439.9 186.4)rotate(220)scale(0.91)"/><use href="#m5" transform="translate(470.1 189.6)rotate(190)scale(0.88)"/><use href="#m4" transform="translate(486.7 190.5)rotate(38)scale(0.94)"/><use href="#m0" transform="translate(78.7 221.2)rotate(220)scale(0.83)"/><use href="#m4" transform="translate(107.3 222.8)rotate(84)scale(1.06)"/><use href="#m1" transform="translate(128.8 218.2)rotate(355)scale(1.01)"/><use href="#m1" transform="translate(156.6 221.9)rotate(204)scale(0.76)"/><use href="#m1" transform="translate(180.8 221.1)rotate(88)scale(1.04)"/><use href="#m2" transform="translate(206.4 214.8)rotate(95)scale(1.19)"/><use href="#m1" transform="translate(227.9 220.4)rotate(325)scale(1.02)"/><use href="#m2" transform="translate(254.5 218)rotate(60)scale(1.12)"/><use href="#m1" transform="translate(284.2 214.9)rotate(44)scale(1.16)"/><use href="#m1" transform="translate(300.6 222.8)rotate(272)scale(0.93)"/><use href="#m8" transform="translate(323.9 218.6)rotate(27)scale(0.77)"/><use href="#m6" transform="translate(349.1 224)rotate(49)scale(1.13)"/><use href="#m5" transform="translate(383.5 222.9)rotate(213)scale(1.15)"/><use href="#m4" transform="translate(396.8 213)rotate(11)scale(1.01)"/><use href="#m2" transform="translate(423.3 215.9)rotate(187)scale(0.88)"/><use href="#m6" transform="translate(454.6 214.8)rotate(282)scale(1.11)"/><use href="#m4" transform="translate(482.6 215.8)rotate(216)scale(0.98)"/><use href="#m7" transform="translate(502.4 218.9)rotate(203)scale(0.95)"/><use href="#m4" transform="translate(88 246.6)rotate(301)scale(1.18)"/><use href="#m5" transform="translate(114.8 240.3)rotate(41)scale(1.22)"/><use href="#m3" transform="translate(138.7 241.5)rotate(325)scale(0.91)"/><use href="#m3" transform="translate(159.9 244.4)rotate(263)scale(1.05)"/><use href="#m5" transform="translate(194.6 238.5)rotate(315)scale(0.87)"/><use href="#m3" transform="translate(220.9 237.6)rotate(350)scale(0.99)"/><use href="#m4" transform="translate(235.6 246.9)rotate(110)scale(0.95)"/><use href="#m7" transform="translate(262.4 235.2)rotate(347)scale(1.08)"/><use href="#m8" transform="translate(296.2 240.1)rotate(59)scale(1.07)"/><use href="#m0" transform="translate(315 235.9)rotate(35)scale(1.15)"/><use href="#m4" transform="translate(335.8 241.7)rotate(0)scale(0.87)"/><use href="#m0" transform="translate(363.3 238.7)rotate(158)scale(0.98)"/><use href="#m7" transform="translate(391.5 236.2)rotate(210)scale(0.77)"/><use href="#m2" transform="translate(409.5 246.8)rotate(116)scale(0.82)"/><use href="#m1" transform="translate(445 245.1)rotate(72)scale(1.18)"/><use href="#m2" transform="translate(468.8 235)rotate(301)scale(0.93)"/><use href="#m7" transform="translate(490.7 236.6)rotate(358)scale(0.85)"/><use href="#m0" transform="translate(80.5 260.9)rotate(234)scale(0.90)"/><use href="#m2" transform="translate(108 271.7)rotate(313)scale(1.11)"/><use href="#m8" transform="translate(123.5 267.9)rotate(160)scale(0.79)"/><use href="#m7" transform="translate(149.7 262.5)rotate(248)scale(0.88)"/><use href="#m2" transform="translate(181.7 265.2)rotate(284)scale(0.94)"/><use href="#m5" transform="translate(205.9 270.6)rotate(185)scale(1.24)"/><use href="#m1" transform="translate(234.1 260.7)rotate(99)scale(1.07)"/><use href="#m4" transform="translate(247.9 272)rotate(330)scale(0.79)"/><use href="#m5" transform="translate(284.3 258.3)rotate(102)scale(0.88)"/><use href="#m2" transform="translate(307.8 259.4)rotate(355)scale(0.84)"/><use href="#m0" transform="translate(324.1 268.5)rotate(67)scale(1.20)"/><use href="#m4" transform="translate(360.4 258.7)rotate(329)scale(1.04)"/><use href="#m0" transform="translate(371.6 270.7)rotate(64)scale(1.03)"/><use href="#m6" transform="translate(405.6 263.2)rotate(174)scale(0.77)"/><use href="#m6" transform="translate(425.7 269.8)rotate(246)scale(1.01)"/><use href="#m8" transform="translate(459.9 260.6)rotate(277)scale(0.81)"/><use href="#m4" transform="translate(477.7 267.6)rotate(278)scale(1.14)"/><use href="#m4" transform="translate(507.7 261.5)rotate(195)scale(1.18)"/><use href="#m1" transform="translate(92.5 285.9)rotate(214)scale(1.11)"/><use href="#m1" transform="translate(117.1 294.4)rotate(117)scale(1.05)"/><use href="#m4" transform="translate(142.6 293.5)rotate(159)scale(0.88)"/><use href="#m1" transform="translate(170.3 283.2)rotate(204)scale(1.02)"/><use href="#m1" transform="translate(195.2 285.5)rotate(19)scale(0.96)"/><use href="#m7" transform="translate(218.8 293.7)rotate(189)scale(0.88)"/><use href="#m4" transform="translate(242.3 283.4)rotate(61)scale(0.88)"/><use href="#m5" transform="translate(261.3 291.9)rotate(283)scale(0.78)"/><use href="#m1" transform="translate(289.8 287.3)rotate(253)scale(1.23)"/><use href="#m5" transform="translate(310.9 292.8)rotate(355)scale(0.82)"/><use href="#m0" transform="translate(340.5 292.6)rotate(1)scale(0.95)"/><use href="#m4" transform="translate(366.5 283.5)rotate(107)scale(0.96)"/><use href="#m7" transform="translate(385.2 282.7)rotate(274)scale(1.12)"/><use href="#m4" transform="translate(412.3 285.7)rotate(307)scale(0.96)"/><use href="#m2" transform="translate(435.3 285.4)rotate(121)scale(1.24)"/><use href="#m3" transform="translate(467.7 282.8)rotate(210)scale(1.25)"/><use href="#m5" transform="translate(494.4 290.1)rotate(332)scale(0.84)"/><use href="#m1" transform="translate(83.6 319.3)rotate(137)scale(1.14)"/><use href="#m1" transform="translate(99.6 311.1)rotate(285)scale(1.15)"/><use href="#m5" transform="translate(128.3 311.8)rotate(168)scale(0.90)"/><use href="#m6" transform="translate(152.9 320.1)rotate(65)scale(0.99)"/><use href="#m0" transform="translate(179.2 312.1)rotate(248)scale(0.93)"/><use href="#m1" transform="translate(200.4 306.5)rotate(266)scale(1.01)"/><use href="#m1" transform="translate(229.5 315.3)rotate(96)scale(0.93)"/><use href="#m2" transform="translate(248.7 319.3)rotate(49)scale(0.87)"/><use href="#m2" transform="translate(283.4 307.9)rotate(301)scale(0.97)"/><use href="#m2" transform="translate(308.6 311.5)rotate(277)scale(1.01)"/><use href="#m1" transform="translate(322.4 311.7)rotate(175)scale(0.84)"/><use href="#m1" transform="translate(353.8 308)rotate(112)scale(0.96)"/><use href="#m7" transform="translate(379.2 308.1)rotate(197)scale(0.91)"/><use href="#m1" transform="translate(402.9 311.5)rotate(300)scale(1.02)"/><use href="#m4" transform="translate(427.9 308.1)rotate(311)scale(0.86)"/><use href="#m1" transform="translate(450.7 311)rotate(50)scale(1.17)"/><use href="#m0" transform="translate(482.1 313)rotate(291)scale(1.24)"/><use href="#m1" transform="translate(500.8 315.6)rotate(200)scale(0.93)"/><use href="#m2" transform="translate(85.8 341)rotate(84)scale(1.07)"/><use href="#m3" transform="translate(110.4 336.2)rotate(177)scale(0.99)"/><use href="#m7" transform="translate(147.1 334.2)rotate(100)scale(0.83)"/><use href="#m1" transform="translate(164.7 336.9)rotate(126)scale(1.11)"/><use href="#m3" transform="translate(191.4 340.6)rotate(289)scale(0.99)"/><use href="#m2" transform="translate(212.7 342.1)rotate(252)scale(0.76)"/><use href="#m0" transform="translate(239.6 335.3)rotate(328)scale(0.89)"/><use href="#m2" transform="translate(264.4 342.1)rotate(168)scale(0.91)"/><use href="#m2" transform="translate(287.6 330.5)rotate(116)scale(0.94)"/><use href="#m1" transform="translate(313.3 341.6)rotate(231)scale(0.94)"/><use href="#m0" transform="translate(338.9 342.8)rotate(207)scale(1.22)"/><use href="#m5" transform="translate(369.9 339)rotate(195)scale(1.06)"/><use href="#m4" transform="translate(385 331.2)rotate(316)scale(0.94)"/><use href="#m1" transform="translate(421.8 330.7)rotate(246)scale(0.89)"/><use href="#m0" transform="translate(441 336.8)rotate(53)scale(0.85)"/><use href="#m1" transform="translate(462.3 339.7)rotate(187)scale(1.21)"/><use href="#m4" transform="translate(497.8 330.2)rotate(177)scale(1.08)"/><use href="#m4" transform="translate(79.3 362.9)rotate(318)scale(1.10)"/><use href="#m0" transform="translate(107.8 357.9)rotate(319)scale(0.91)"/><use href="#m6" transform="translate(131.6 363.9)rotate(56)scale(0.85)"/><use href="#m7" transform="translate(148.9 358.9)rotate(176)scale(1.03)"/><use href="#m7" transform="translate(176.8 358.2)rotate(240)scale(1.00)"/><use href="#m7" transform="translate(205.6 359.3)rotate(64)scale(1.01)"/><use href="#m0" transform="translate(223.4 355.1)rotate(294)scale(1.19)"/><use href="#m4" transform="translate(250.9 366.1)rotate(277)scale(0.99)"/><use href="#m4" transform="translate(273.9 366.3)rotate(19)scale(0.88)"/><use href="#m3" transform="translate(303.7 365.4)rotate(91)scale(1.07)"/><use href="#m1" transform="translate(326.7 363.8)rotate(120)scale(1.13)"/><use href="#m5" transform="translate(358.4 365.8)rotate(354)scale(1.07)"/><use href="#m2" transform="translate(373.4 364.6)rotate(288)scale(0.81)"/><use href="#m1" transform="translate(401.9 363.6)rotate(234)scale(1.24)"/><use href="#m8" transform="translate(428.2 363.9)rotate(349)scale(0.82)"/><use href="#m6" transform="translate(456.2 360.1)rotate(239)scale(0.94)"/><use href="#m1" transform="translate(481.1 356.1)rotate(256)scale(0.81)"/><use href="#m7" transform="translate(497.2 358.2)rotate(193)scale(1.15)"/><use href="#m4" transform="translate(89.8 390.9)rotate(308)scale(0.84)"/><use href="#m6" transform="translate(110 384.3)rotate(102)scale(0.95)"/><use href="#m5" transform="translate(142.7 388.9)rotate(140)scale(1.10)"/><use href="#m1" transform="translate(166.7 389.4)rotate(159)scale(1.17)"/><use href="#m4" transform="translate(191.9 390.8)rotate(155)scale(0.83)"/><use href="#m5" transform="translate(221.5 382)rotate(51)scale(1.06)"/><use href="#m4" transform="translate(237.9 381.4)rotate(72)scale(1.03)"/><use href="#m0" transform="translate(266.9 380.3)rotate(321)scale(0.90)"/><use href="#m4" transform="translate(285.2 380.8)rotate(50)scale(1.14)"/><use href="#m0" transform="translate(323 383.9)rotate(149)scale(1.15)"/><use href="#m4" transform="translate(339.6 379)rotate(222)scale(1.16)"/><use href="#m2" transform="translate(362.6 380.8)rotate(311)scale(1.25)"/><use href="#m7" transform="translate(390.3 389.9)rotate(16)scale(1.18)"/><use href="#m6" transform="translate(422.3 385.7)rotate(26)scale(0.93)"/><use href="#m4" transform="translate(444.6 382.5)rotate(167)scale(1.19)"/><use href="#m8" transform="translate(460 383.3)rotate(189)scale(1.16)"/><use href="#m3" transform="translate(495.2 388.5)rotate(110)scale(1.02)"/></g></g>
<use href="#mapd" fill="none" stroke="#16305e" stroke-width="1.1" stroke-linejoin="round" clip-path="url(#cpt)"/>
<use href="#mapd" fill="none" stroke="#5a5420" stroke-width=".8" stroke-linejoin="round" clip-path="url(#cpb)"/>
<path d="M362 309L366 313L378 332L380.5 334.5" fill="none" stroke="#5a5420" stroke-width=".7"/>
<g fill="#0b0e2a" font-style="italic">
<text x="121" y="209" font-size="60" fill="#141735">Ч</text>
<text transform="translate(167 209)scale(1.45 1)" textLength="84.1" lengthAdjust="spacing" font-size="28.5">ужого</text>
<text transform="translate(303 209)scale(1.34 1)" textLength="25.4" lengthAdjust="spacing" font-size="28.5">не</text>
<text transform="translate(352 209)scale(1.34 1)" textLength="86.6" lengthAdjust="spacing" font-size="28.5">треба,</text>
<text transform="translate(153 260)scale(1.34 1)" textLength="52.2" lengthAdjust="spacing" font-size="28.5">своє</text>
<text transform="translate(236 260)scale(1.34 1)" textLength="26.1" lengthAdjust="spacing" font-size="28.5">не</text>
<text transform="translate(289 260)scale(1.34 1)" textLength="109.7" lengthAdjust="spacing" font-size="28.5">віддам<tspan font-size="50">!</tspan></text>
</g>
<text x="119" y="379.5" textLength="343" lengthAdjust="spacing" font-style="italic" font-size="11.6" fill="#4a4a3c" xml:space="preserve">I dont's need someone else's, I won't give  what belongs to me!</text>
</svg>
<!--SLIDE-END-->
  <!--PRESENTERBAR-START-->
<svg class="abs" style="left:0;top:325px" width="520" height="40" viewBox="3 390 520 40" font-family="'Liberation Sans',sans-serif">
<path d="M94 403L88.6 407.6L94 412.2" fill="none" stroke="#d6d6d6" stroke-width="1.2" stroke-linecap="round" stroke-linejoin="round"/>
<text x="111.5" y="411.2" font-size="9.6" fill="#d2d2d2" textLength="32" lengthAdjust="spacingAndGlyphs">81 із 81</text>
<path d="M162 403L167.4 407.6L162 412.2" fill="none" stroke="#4e4e4e" stroke-width="1.2" stroke-linecap="round" stroke-linejoin="round"/>
<g fill="none" stroke="#d0d0d0" stroke-width="1"><rect x="185.5" y="401.9" width="3.6" height="3.6" rx=".6"/><rect x="185.5" y="407.3" width="3.6" height="3.6" rx=".6"/><path d="M191 401.9H194.6V403.6"/><rect x="189.8" y="405.3" width="8.4" height="8.4" rx="1" fill="#1f1f1f"/></g>
<g fill="#d6d6d6"><circle cx="214.8" cy="407.6" r="1"/><circle cx="218.4" cy="407.6" r="1"/><circle cx="222" cy="407.6" r="1"/></g>
<rect x="238.7" y="397" width=".8" height="19.5" fill="#444"/>
<path d="M254.8 402V413L257.7 410.4H264.4Z" fill="#fff"/>
<rect x="247.8" y="419" width="22.6" height="2.2" rx="1" fill="#a9abe0"/>
<!-- laser -->
<rect x="279.8" y="404" width="12.6" height="13.8" rx="1.5" fill="#6e6e6e"/><rect x="282.5" y="407.5" width="7" height="7.5" fill="#808080"/><rect x="285" y="409.5" width="2.2" height="3.4" fill="#9a9a9a"/><circle cx="286.2" cy="400.3" r="1.3" fill="#c2354a"/>
<!-- red pen -->
<path d="M313.3 399.3L318.9 411V417Q318.9 418.4 317.5 418.4H309.1Q307.7 418.4 307.7 417V411Z" fill="#4a2c30"/><path d="M307.7 410.8H318.9V417Q318.9 418.4 317.5 418.4H309.1Q307.7 418.4 307.7 417Z" fill="#d4202c"/><circle cx="313.3" cy="400.2" r="1.5" fill="#d43a48"/>
<!-- highlighter -->
<path d="M338.5 401.5L342.5 399.3H344.5V402.5L347.8 409V417Q347.8 418.4 346.4 418.4H335.1Q333.7 418.4 333.7 417V410Z" fill="#4c4a34"/><path d="M338.5 401.5L342.5 399.3H344.5V402.5Z" fill="#e8e23a"/><path d="M333.7 411H347.8V417Q347.8 418.4 346.4 418.4H335.1Q333.7 418.4 333.7 417Z" fill="#dcd820"/>
<!-- eraser -->
<rect x="362" y="399" width="11" height="18.8" rx="1.5" fill="#6c6c6c"/><rect x="362" y="399" width="11" height="4.8" rx="1.5" fill="#f0a2b2"/><rect x="364.5" y="405.5" width="6" height="12" fill="#787878"/>
</svg>
<!--PRESENTERBAR-END-->
  <!--NOTES-START-->
<div class="abs" style="left:571.200px;top:26.200px;font-size:18.050px;color:#c9c9c9;line-height:20px;white-space:nowrap">Нотаток немає</div>
<div class="abs" style="left:566.300px;top:304.100px;font-size:13.200px;color:#b4b4b4;line-height:14px">A<span style="font-size:6px;position:absolute;top:-1.500px;left:9.800px">ˆ</span></div>
<div class="abs" style="left:588.800px;top:305.600px;font-size:10.800px;color:#b4b4b4;line-height:12px">A<span style="font-size:6px;position:absolute;top:-2.500px;left:8.200px">ˇ</span></div>
<!--NOTES-END-->
  <!--THUMBS-START-->
<div class="thumb" style="left:-56.7px"><svg width="116.4" height="86.4" viewBox="0 0 116 86" preserveAspectRatio="none" font-family="'Liberation Sans',sans-serif"><defs><linearGradient id="g75" x1="0" y1="0" x2="1" y2="0"><stop offset=".5" stop-color="#e6d27c"/><stop offset=".78" stop-color="#c9dcc4"/><stop offset="1" stop-color="#a4d0e4"/></linearGradient><linearGradient id="g75b" x1="0" y1="0" x2="0" y2="1"><stop offset="0" stop-color="#e9b765"/><stop offset="1" stop-color="#e08c3a"/></linearGradient></defs>
<rect width="116" height="86" fill="url(#g75)"/><rect y="46" width="116" height="40" fill="url(#g75b)"/>
<path d="M92 46Q96 40 101 42Q106 38 110 41Q114 40 116 42V48H92Z" fill="#7da83a"/><path d="M88 47H116V49.5H88Z" fill="#a9a04a"/>
<path d="M58 8Q62 6 64 10L66 20L70 28L68 44L70 60L66 70H58Z" fill="#b4302a"/><circle cx="61" cy="11" r="3" fill="#c98a66"/>
<path d="M68 24Q72 18 77 20Q82 22 82 30L84 44L82 62H70L68 44Z" fill="#c9502e"/><circle cx="75" cy="19" r="3" fill="#d2a07c"/><path d="M71 30L80 30L82 60L72 62Z" fill="#e0a048"/>
<path d="M80 30Q84 24 88 28L90 40L88 58H80Z" fill="#6a7048"/><circle cx="85" cy="26" r="2.6" fill="#b9a58a"/>
<path d="M84 36Q88 30 93 33Q97 36 96 44L97 60L95 72H84L83 50Z" fill="#2e3238"/><circle cx="90" cy="31" r="2.8" fill="#8a7a6a"/>
<path d="M94 56Q99 52 102 57L103 70H94Z" fill="#23262c"/>
<g font-weight="bold" stroke-linejoin="round">
<text transform="translate(89.5 67)scale(.8 1)" text-anchor="end" font-size="9.6" fill="#f4f4f0" stroke="#3a2a1c" stroke-width=".6" paint-order="stroke">З ДНЕМ</text>
<text transform="translate(107.5 83)scale(.78 1)" text-anchor="end" font-size="12.6" fill="#f5c518" stroke="#7a3a10" stroke-width=".7" paint-order="stroke">ЗАХИСНИКА УКРАЇНИ!</text></g></svg></div>
<div class="thumb" style="left:75.2px"><svg width="116.4" height="86.4" viewBox="0 0 116 86" preserveAspectRatio="none" font-family="'Liberation Sans',sans-serif"><defs><radialGradient id="g76" cx=".55" cy=".5" r=".6"><stop offset="0" stop-color="#2f8fd2"/><stop offset=".55" stop-color="#1a5c98"/><stop offset="1" stop-color="#0d2c4c"/></radialGradient></defs>
<rect width="116" height="86" fill="#020305"/><rect y="10" width="116" height="65" fill="url(#g76)"/>
<g opacity=".85"><circle cx="23.9" cy="23.5" r="1.20" fill="#4ab0e6"/><circle cx="101.4" cy="46.4" r="0.97" fill="#8fdcff"/><circle cx="77.5" cy="38.1" r="1.14" fill="#2f7fc4"/><circle cx="52.5" cy="48.4" r="0.46" fill="#8fdcff"/><circle cx="69.7" cy="56.5" r="0.58" fill="#2f7fc4"/><circle cx="69.4" cy="34.1" r="0.81" fill="#bfeaff"/><circle cx="83.8" cy="40.5" r="0.68" fill="#8fdcff"/><circle cx="105.1" cy="37.9" r="0.95" fill="#4ab0e6"/><circle cx="58.7" cy="45.4" r="0.58" fill="#2f7fc4"/><circle cx="71.6" cy="47.9" r="1.10" fill="#3a9ad8"/><circle cx="24.8" cy="31.2" r="0.72" fill="#4ab0e6"/><circle cx="40.9" cy="72.2" r="1.01" fill="#2f7fc4"/><circle cx="79.3" cy="60.6" r="0.50" fill="#8fdcff"/><circle cx="71.2" cy="42.4" r="0.74" fill="#4ab0e6"/><circle cx="28.6" cy="55.1" r="0.74" fill="#2f7fc4"/><circle cx="60" cy="41.9" r="1.02" fill="#5fc4f0"/><circle cx="3.8" cy="13.4" r="1.05" fill="#5fc4f0"/><circle cx="46.2" cy="56.2" r="0.65" fill="#bfeaff"/><circle cx="19.8" cy="48.2" r="1.14" fill="#3a9ad8"/><circle cx="90.1" cy="51.4" r="0.74" fill="#bfeaff"/><circle cx="80.3" cy="54" r="0.89" fill="#4ab0e6"/><circle cx="52.7" cy="56.7" r="1.09" fill="#8fdcff"/><circle cx="26" cy="23.6" r="1.25" fill="#3a9ad8"/><circle cx="69.7" cy="47.6" r="0.88" fill="#bfeaff"/><circle cx="43.2" cy="50" r="0.73" fill="#bfeaff"/><circle cx="63.9" cy="67.7" r="0.49" fill="#8fdcff"/><circle cx="71.6" cy="40.8" r="0.72" fill="#2f7fc4"/><circle cx="47.3" cy="39.4" r="0.54" fill="#2f7fc4"/><circle cx="46.3" cy="46.9" r="0.69" fill="#2f7fc4"/><circle cx="26.3" cy="48.7" r="0.70" fill="#4ab0e6"/><circle cx="58.2" cy="61.9" r="0.54" fill="#8fdcff"/><circle cx="82.3" cy="24.2" r="0.95" fill="#8fdcff"/><circle cx="33.1" cy="43.1" r="0.84" fill="#5fc4f0"/><circle cx="21.3" cy="41" r="0.74" fill="#bfeaff"/><circle cx="77.2" cy="14.4" r="0.92" fill="#4ab0e6"/><circle cx="92.4" cy="46.1" r="1.01" fill="#bfeaff"/><circle cx="56.4" cy="62.2" r="1.02" fill="#4ab0e6"/><circle cx="93.9" cy="38.9" r="0.91" fill="#8fdcff"/><circle cx="106.7" cy="44.6" r="0.71" fill="#3a9ad8"/><circle cx="59.8" cy="56.9" r="0.97" fill="#bfeaff"/><circle cx="73.3" cy="28" r="0.73" fill="#4ab0e6"/><circle cx="96.2" cy="36.3" r="1.15" fill="#8fdcff"/><circle cx="103.6" cy="37.5" r="1.23" fill="#bfeaff"/><circle cx="74.2" cy="58.3" r="0.68" fill="#2f7fc4"/><circle cx="108.6" cy="55" r="0.59" fill="#2f7fc4"/><circle cx="72.5" cy="21" r="1.20" fill="#4ab0e6"/><circle cx="50" cy="63.4" r="0.67" fill="#4ab0e6"/><circle cx="86.4" cy="42.7" r="0.80" fill="#bfeaff"/><circle cx="50" cy="33.3" r="0.59" fill="#4ab0e6"/><circle cx="84.3" cy="41.7" r="0.54" fill="#8fdcff"/><circle cx="102.2" cy="39.1" r="0.48" fill="#bfeaff"/><circle cx="31.5" cy="46.6" r="0.51" fill="#bfeaff"/><circle cx="79.3" cy="68.9" r="0.45" fill="#3a9ad8"/><circle cx="41.2" cy="50.7" r="1.14" fill="#2f7fc4"/><circle cx="48" cy="23.2" r="0.89" fill="#5fc4f0"/><circle cx="55" cy="56.5" r="0.72" fill="#bfeaff"/><circle cx="78.8" cy="26.9" r="0.96" fill="#bfeaff"/><circle cx="51.2" cy="49.9" r="0.76" fill="#bfeaff"/><circle cx="41.6" cy="44.6" r="0.94" fill="#8fdcff"/><circle cx="21.3" cy="72" r="0.76" fill="#5fc4f0"/><circle cx="34.8" cy="39.3" r="0.75" fill="#bfeaff"/><circle cx="41.9" cy="48.1" r="0.83" fill="#3a9ad8"/><circle cx="55.3" cy="26.8" r="0.93" fill="#8fdcff"/><circle cx="28.8" cy="43.4" r="1.21" fill="#3a9ad8"/><circle cx="68.6" cy="45.9" r="0.95" fill="#4ab0e6"/><circle cx="37.4" cy="47.9" r="1.11" fill="#8fdcff"/><circle cx="105.8" cy="44.7" r="0.64" fill="#3a9ad8"/><circle cx="54.8" cy="43.7" r="0.66" fill="#2f7fc4"/><circle cx="51.5" cy="65.4" r="0.86" fill="#2f7fc4"/><circle cx="109.9" cy="16.5" r="0.46" fill="#5fc4f0"/><circle cx="83.5" cy="52.9" r="0.72" fill="#4ab0e6"/><circle cx="51.9" cy="63" r="0.73" fill="#2f7fc4"/><circle cx="38.1" cy="14.7" r="0.48" fill="#8fdcff"/><circle cx="63.4" cy="61.7" r="1.16" fill="#5fc4f0"/><circle cx="58.4" cy="42.2" r="0.93" fill="#2f7fc4"/><circle cx="24.1" cy="15.9" r="0.83" fill="#2f7fc4"/><circle cx="41.6" cy="18.3" r="0.82" fill="#3a9ad8"/><circle cx="65.5" cy="28.6" r="1.01" fill="#5fc4f0"/><circle cx="38.5" cy="48.7" r="1.18" fill="#2f7fc4"/><circle cx="88.2" cy="58.2" r="1.16" fill="#bfeaff"/><circle cx="105.6" cy="39.4" r="0.92" fill="#2f7fc4"/><circle cx="68.8" cy="37.1" r="0.66" fill="#8fdcff"/><circle cx="74.5" cy="46.1" r="0.72" fill="#5fc4f0"/><circle cx="52.4" cy="45.8" r="1.01" fill="#2f7fc4"/><circle cx="73.4" cy="67" r="1.02" fill="#5fc4f0"/><circle cx="82.8" cy="53.6" r="0.57" fill="#2f7fc4"/><circle cx="37" cy="31.7" r="0.50" fill="#8fdcff"/><circle cx="73.9" cy="64.1" r="0.75" fill="#4ab0e6"/><circle cx="74.5" cy="45.6" r="0.54" fill="#bfeaff"/><circle cx="25.8" cy="57.1" r="0.80" fill="#5fc4f0"/><circle cx="45.8" cy="64.2" r="0.73" fill="#2f7fc4"/><circle cx="22" cy="11.6" r="1.01" fill="#8fdcff"/><circle cx="92" cy="62.5" r="0.68" fill="#bfeaff"/><circle cx="104.1" cy="35.3" r="0.66" fill="#8fdcff"/><circle cx="39.3" cy="38.8" r="0.86" fill="#3a9ad8"/><circle cx="80.6" cy="52.3" r="0.81" fill="#3a9ad8"/><circle cx="50.2" cy="48.8" r="0.97" fill="#5fc4f0"/><circle cx="107.4" cy="55.9" r="1.14" fill="#5fc4f0"/><circle cx="26.7" cy="42.2" r="1.15" fill="#2f7fc4"/><circle cx="34.2" cy="44.8" r="0.47" fill="#bfeaff"/><circle cx="62.2" cy="37.4" r="1.21" fill="#8fdcff"/><circle cx="9.4" cy="56" r="0.54" fill="#4ab0e6"/><circle cx="113.5" cy="38.7" r="0.56" fill="#8fdcff"/><circle cx="41.5" cy="31.8" r="0.68" fill="#8fdcff"/><circle cx="112.2" cy="31.8" r="0.75" fill="#2f7fc4"/><circle cx="58.5" cy="27.2" r="1.09" fill="#3a9ad8"/><circle cx="3.3" cy="56.5" r="0.48" fill="#bfeaff"/><circle cx="87.6" cy="42.5" r="0.77" fill="#8fdcff"/><circle cx="71.2" cy="45.5" r="0.61" fill="#8fdcff"/><circle cx="47.3" cy="29.6" r="0.83" fill="#2f7fc4"/><circle cx="100.4" cy="27.9" r="0.71" fill="#2f7fc4"/><circle cx="42.5" cy="45.6" r="0.58" fill="#4ab0e6"/><circle cx="40.3" cy="54.9" r="0.57" fill="#2f7fc4"/><circle cx="63.3" cy="56.7" r="1.05" fill="#8fdcff"/><circle cx="59.8" cy="39.1" r="0.73" fill="#5fc4f0"/><circle cx="64.4" cy="28.2" r="1.00" fill="#5fc4f0"/><circle cx="46.3" cy="26" r="0.54" fill="#8fdcff"/><circle cx="50.2" cy="30.7" r="0.64" fill="#4ab0e6"/><circle cx="72.9" cy="42.8" r="0.47" fill="#4ab0e6"/><circle cx="65.7" cy="49.8" r="1.18" fill="#2f7fc4"/><circle cx="50.2" cy="18.3" r="0.82" fill="#8fdcff"/><circle cx="52.6" cy="70" r="0.82" fill="#4ab0e6"/><circle cx="67.4" cy="32.6" r="1.20" fill="#8fdcff"/><circle cx="42" cy="28.7" r="0.46" fill="#3a9ad8"/><circle cx="55.3" cy="45.8" r="1.12" fill="#bfeaff"/><circle cx="86.9" cy="24.3" r="1.02" fill="#5fc4f0"/><circle cx="69" cy="73.5" r="1.20" fill="#5fc4f0"/><circle cx="88" cy="47.2" r="0.85" fill="#5fc4f0"/><circle cx="66.1" cy="37.8" r="0.81" fill="#2f7fc4"/><circle cx="20" cy="16.2" r="0.59" fill="#8fdcff"/><circle cx="29.6" cy="42.1" r="0.64" fill="#bfeaff"/><circle cx="71.1" cy="48.7" r="0.62" fill="#4ab0e6"/><circle cx="106.1" cy="45.3" r="0.79" fill="#2f7fc4"/><circle cx="68.7" cy="22.5" r="1.03" fill="#8fdcff"/><circle cx="88.9" cy="35.4" r="1.16" fill="#2f7fc4"/><circle cx="107.2" cy="43" r="0.70" fill="#8fdcff"/><circle cx="113.9" cy="58.3" r="0.70" fill="#2f7fc4"/><circle cx="73.6" cy="48.1" r="1.01" fill="#8fdcff"/><circle cx="50.3" cy="31.2" r="1.01" fill="#2f7fc4"/><circle cx="85.7" cy="46.4" r="1.16" fill="#3a9ad8"/><circle cx="73.9" cy="38.7" r="0.75" fill="#3a9ad8"/><circle cx="64.1" cy="42.8" r="0.97" fill="#3a9ad8"/><circle cx="66.7" cy="20.8" r="0.56" fill="#2f7fc4"/><circle cx="41.3" cy="15.6" r="1.03" fill="#5fc4f0"/><circle cx="55.9" cy="30.2" r="0.90" fill="#2f7fc4"/><circle cx="51.4" cy="56.1" r="0.66" fill="#8fdcff"/><circle cx="51.5" cy="30.5" r="0.88" fill="#5fc4f0"/><circle cx="63.4" cy="39" r="0.49" fill="#5fc4f0"/><circle cx="85.9" cy="54.7" r="1.21" fill="#3a9ad8"/><circle cx="45.2" cy="35" r="0.55" fill="#2f7fc4"/><circle cx="73.7" cy="58.3" r="0.92" fill="#8fdcff"/><circle cx="89.5" cy="18.7" r="0.66" fill="#5fc4f0"/><circle cx="26.3" cy="28.2" r="0.81" fill="#8fdcff"/><circle cx="85.9" cy="53" r="0.82" fill="#8fdcff"/><circle cx="30.4" cy="50.4" r="1.20" fill="#4ab0e6"/><circle cx="50.9" cy="38.5" r="1.00" fill="#2f7fc4"/><circle cx="64.4" cy="43.8" r="0.64" fill="#bfeaff"/><circle cx="55.1" cy="27.7" r="0.62" fill="#2f7fc4"/><circle cx="60.1" cy="54.2" r="0.86" fill="#bfeaff"/><circle cx="69.5" cy="13.3" r="0.73" fill="#3a9ad8"/><circle cx="99.6" cy="15.1" r="0.85" fill="#bfeaff"/><circle cx="53" cy="50.7" r="0.84" fill="#8fdcff"/><circle cx="84.1" cy="45.4" r="1.05" fill="#5fc4f0"/><circle cx="80.4" cy="15.7" r="1.00" fill="#2f7fc4"/><circle cx="95" cy="25" r="0.75" fill="#8fdcff"/><circle cx="104.6" cy="44.3" r="0.95" fill="#bfeaff"/><circle cx="66.8" cy="39.7" r="0.47" fill="#4ab0e6"/><circle cx="51.3" cy="58.4" r="0.89" fill="#2f7fc4"/><circle cx="50.5" cy="25.7" r="1.19" fill="#bfeaff"/><circle cx="46.2" cy="19.3" r="0.57" fill="#bfeaff"/><circle cx="71.5" cy="56.5" r="0.52" fill="#5fc4f0"/><circle cx="36.3" cy="60.6" r="0.78" fill="#4ab0e6"/><circle cx="69.7" cy="42.4" r="0.64" fill="#4ab0e6"/><circle cx="78.2" cy="44.7" r="1.17" fill="#3a9ad8"/><circle cx="39.2" cy="13" r="0.93" fill="#4ab0e6"/><circle cx="27.9" cy="35.6" r="1.17" fill="#5fc4f0"/><circle cx="31.3" cy="38.4" r="0.99" fill="#5fc4f0"/><circle cx="23.2" cy="62.7" r="1.17" fill="#bfeaff"/><circle cx="103.6" cy="30.5" r="0.71" fill="#2f7fc4"/><circle cx="103.4" cy="13.3" r="1.02" fill="#4ab0e6"/><circle cx="14.1" cy="68.2" r="0.69" fill="#8fdcff"/><circle cx="81.8" cy="14" r="1.17" fill="#5fc4f0"/><circle cx="87.9" cy="63.9" r="0.63" fill="#8fdcff"/><circle cx="104.6" cy="51.4" r="1.15" fill="#4ab0e6"/><circle cx="59.1" cy="25.5" r="0.84" fill="#2f7fc4"/><circle cx="43.1" cy="35.8" r="0.67" fill="#2f7fc4"/><circle cx="67.3" cy="46.9" r="0.69" fill="#5fc4f0"/><circle cx="22.8" cy="35.6" r="0.60" fill="#2f7fc4"/><circle cx="23.4" cy="29.3" r="0.71" fill="#4ab0e6"/><circle cx="90.7" cy="58.7" r="0.70" fill="#5fc4f0"/><circle cx="92.9" cy="23.2" r="1.16" fill="#8fdcff"/><circle cx="18.5" cy="22.9" r="0.45" fill="#5fc4f0"/><circle cx="56.2" cy="35.7" r="0.57" fill="#3a9ad8"/><circle cx="52" cy="37.7" r="1.04" fill="#2f7fc4"/><circle cx="88.8" cy="15" r="1.16" fill="#4ab0e6"/><circle cx="21.3" cy="36.2" r="0.74" fill="#5fc4f0"/><circle cx="72.8" cy="32.7" r="0.75" fill="#3a9ad8"/><circle cx="14.4" cy="49.6" r="1.06" fill="#4ab0e6"/><circle cx="60.5" cy="43.4" r="1.22" fill="#bfeaff"/><circle cx="65.9" cy="44" r="1.22" fill="#2f7fc4"/><circle cx="76.4" cy="40.8" r="1.02" fill="#4ab0e6"/><circle cx="74.5" cy="57.7" r="0.68" fill="#8fdcff"/><circle cx="11.5" cy="43.2" r="0.91" fill="#5fc4f0"/><circle cx="55.2" cy="57.8" r="0.87" fill="#5fc4f0"/><circle cx="97.8" cy="48.5" r="0.67" fill="#8fdcff"/><circle cx="60.4" cy="33.6" r="0.89" fill="#5fc4f0"/><circle cx="44.5" cy="47.4" r="1.13" fill="#2f7fc4"/><circle cx="65.2" cy="61.6" r="1.10" fill="#8fdcff"/><circle cx="60" cy="45.4" r="0.90" fill="#3a9ad8"/><circle cx="85.2" cy="71.8" r="0.83" fill="#5fc4f0"/><circle cx="87.6" cy="50" r="0.83" fill="#4ab0e6"/><circle cx="83.9" cy="44.4" r="0.80" fill="#bfeaff"/><circle cx="3" cy="22.7" r="0.94" fill="#4ab0e6"/><circle cx="43.8" cy="36.8" r="1.07" fill="#2f7fc4"/><circle cx="4.8" cy="60.9" r="1.18" fill="#2f7fc4"/><circle cx="99.4" cy="66.8" r="1.12" fill="#2f7fc4"/><circle cx="92.9" cy="50.6" r="0.79" fill="#2f7fc4"/><circle cx="59" cy="62" r="0.45" fill="#3a9ad8"/><circle cx="25" cy="21.4" r="0.51" fill="#2f7fc4"/><circle cx="60.5" cy="38.8" r="1.16" fill="#2f7fc4"/><circle cx="66.2" cy="46.1" r="1.22" fill="#2f7fc4"/><circle cx="49" cy="37.6" r="0.51" fill="#8fdcff"/><circle cx="32.8" cy="60.7" r="0.60" fill="#5fc4f0"/><circle cx="39.8" cy="48.8" r="0.75" fill="#4ab0e6"/><circle cx="67.1" cy="33.4" r="1.17" fill="#bfeaff"/><circle cx="97.9" cy="29.4" r="0.54" fill="#3a9ad8"/><circle cx="43.6" cy="30.1" r="1.18" fill="#3a9ad8"/><circle cx="28.8" cy="37.6" r="1.22" fill="#8fdcff"/><circle cx="68.1" cy="45.5" r="1.04" fill="#5fc4f0"/><circle cx="90" cy="57.5" r="0.49" fill="#4ab0e6"/><circle cx="87.3" cy="44.1" r="0.85" fill="#8fdcff"/><circle cx="17.6" cy="23.7" r="1.09" fill="#5fc4f0"/><circle cx="67.8" cy="69" r="1.07" fill="#3a9ad8"/><circle cx="29.8" cy="36.5" r="0.97" fill="#5fc4f0"/><circle cx="93.1" cy="35.6" r="0.67" fill="#bfeaff"/><circle cx="24.4" cy="31.6" r="1.24" fill="#2f7fc4"/><circle cx="57.4" cy="52.7" r="0.51" fill="#4ab0e6"/><circle cx="11.3" cy="51.8" r="0.95" fill="#bfeaff"/><circle cx="97.2" cy="54.8" r="0.75" fill="#bfeaff"/><circle cx="32.5" cy="53.2" r="0.85" fill="#5fc4f0"/><circle cx="42.8" cy="38.3" r="0.48" fill="#2f7fc4"/><circle cx="63.2" cy="34.5" r="0.75" fill="#8fdcff"/><circle cx="30.3" cy="69.3" r="1.08" fill="#2f7fc4"/><circle cx="62.5" cy="29.8" r="0.95" fill="#5fc4f0"/><circle cx="27.4" cy="58.4" r="1.01" fill="#8fdcff"/><circle cx="5.9" cy="24" r="0.93" fill="#8fdcff"/><circle cx="53.3" cy="49.9" r="0.48" fill="#2f7fc4"/><circle cx="81.8" cy="25.3" r="0.48" fill="#4ab0e6"/><circle cx="49.6" cy="38.5" r="0.87" fill="#4ab0e6"/><circle cx="22.3" cy="50.9" r="1.21" fill="#bfeaff"/><circle cx="73.5" cy="47" r="0.92" fill="#4ab0e6"/><circle cx="50.2" cy="62.6" r="1.03" fill="#bfeaff"/><circle cx="108.2" cy="53.3" r="0.55" fill="#3a9ad8"/><circle cx="64.7" cy="29.9" r="0.69" fill="#3a9ad8"/><circle cx="85.7" cy="32.6" r="1.17" fill="#4ab0e6"/><circle cx="44.7" cy="45.1" r="1.20" fill="#8fdcff"/><circle cx="45.5" cy="64.5" r="0.52" fill="#2f7fc4"/><circle cx="55.7" cy="48.5" r="0.80" fill="#2f7fc4"/><circle cx="30.2" cy="41.1" r="0.56" fill="#8fdcff"/><circle cx="12.2" cy="44.4" r="1.20" fill="#2f7fc4"/><circle cx="60.5" cy="45.6" r="0.66" fill="#2f7fc4"/><circle cx="21.9" cy="43.8" r="0.89" fill="#8fdcff"/><circle cx="45.4" cy="27.9" r="1.12" fill="#3a9ad8"/><circle cx="59.6" cy="50.8" r="0.79" fill="#3a9ad8"/><circle cx="87.2" cy="26.1" r="0.95" fill="#2f7fc4"/><circle cx="107.4" cy="62.5" r="0.53" fill="#3a9ad8"/><circle cx="83.1" cy="32.9" r="0.59" fill="#bfeaff"/><circle cx="71" cy="22" r="0.96" fill="#8fdcff"/><circle cx="59.7" cy="30" r="1.14" fill="#2f7fc4"/><circle cx="85.7" cy="33.1" r="1.02" fill="#3a9ad8"/><circle cx="5.9" cy="61.3" r="0.50" fill="#5fc4f0"/><circle cx="72.7" cy="45" r="1.08" fill="#5fc4f0"/><circle cx="96.1" cy="30.8" r="0.82" fill="#5fc4f0"/><circle cx="96" cy="50.7" r="0.88" fill="#bfeaff"/><circle cx="34.2" cy="22" r="1.20" fill="#3a9ad8"/><circle cx="99.9" cy="36.7" r="0.59" fill="#5fc4f0"/><circle cx="65.2" cy="66.5" r="0.52" fill="#5fc4f0"/><circle cx="106.4" cy="41.3" r="0.54" fill="#2f7fc4"/><circle cx="51" cy="60.5" r="0.48" fill="#2f7fc4"/><circle cx="97.2" cy="61.5" r="1.18" fill="#8fdcff"/><circle cx="35.6" cy="70.6" r="0.51" fill="#bfeaff"/><circle cx="45.6" cy="31.7" r="1.18" fill="#bfeaff"/><circle cx="28.2" cy="34" r="0.58" fill="#3a9ad8"/><circle cx="38" cy="29.4" r="1.06" fill="#2f7fc4"/><circle cx="49.6" cy="37.4" r="0.82" fill="#8fdcff"/><circle cx="40.6" cy="47.2" r="0.58" fill="#8fdcff"/><circle cx="95.3" cy="52.9" r="0.82" fill="#bfeaff"/><circle cx="36.8" cy="15.6" r="0.53" fill="#2f7fc4"/><circle cx="41.3" cy="36.7" r="1.01" fill="#3a9ad8"/><circle cx="22.2" cy="37.3" r="1.06" fill="#8fdcff"/><circle cx="40.5" cy="62.5" r="1.12" fill="#4ab0e6"/><circle cx="93.2" cy="28.4" r="0.68" fill="#bfeaff"/><circle cx="29" cy="73.1" r="0.87" fill="#8fdcff"/><circle cx="55" cy="58.7" r="0.68" fill="#8fdcff"/><circle cx="102.5" cy="47" r="0.70" fill="#8fdcff"/><circle cx="94.2" cy="23" r="1.11" fill="#2f7fc4"/><circle cx="32.3" cy="32.7" r="0.87" fill="#4ab0e6"/><circle cx="39.6" cy="65.9" r="0.58" fill="#5fc4f0"/><circle cx="62.3" cy="43" r="1.07" fill="#2f7fc4"/><circle cx="69.3" cy="38.7" r="0.45" fill="#bfeaff"/><circle cx="74.1" cy="52.1" r="0.64" fill="#bfeaff"/><circle cx="87.5" cy="21.3" r="0.78" fill="#2f7fc4"/><circle cx="96" cy="24.5" r="0.61" fill="#5fc4f0"/><circle cx="65.1" cy="49.3" r="0.75" fill="#bfeaff"/><circle cx="43" cy="37" r="0.75" fill="#5fc4f0"/><circle cx="17" cy="26.7" r="1.08" fill="#2f7fc4"/><circle cx="61.6" cy="42.8" r="0.50" fill="#2f7fc4"/><circle cx="93.5" cy="54.7" r="1.17" fill="#2f7fc4"/><circle cx="36.4" cy="45.7" r="0.47" fill="#5fc4f0"/><circle cx="80.3" cy="15.1" r="0.82" fill="#bfeaff"/><circle cx="29.9" cy="27.3" r="0.61" fill="#bfeaff"/><circle cx="42.6" cy="28" r="0.61" fill="#bfeaff"/><circle cx="92.4" cy="49.2" r="0.88" fill="#5fc4f0"/><circle cx="79.9" cy="36.2" r="0.45" fill="#2f7fc4"/><circle cx="38.1" cy="49.2" r="1.15" fill="#4ab0e6"/><circle cx="18.6" cy="61.4" r="1.17" fill="#5fc4f0"/><circle cx="55.1" cy="32" r="1.17" fill="#2f7fc4"/><circle cx="57.8" cy="63.5" r="1.00" fill="#8fdcff"/><circle cx="96.9" cy="23.2" r="1.15" fill="#5fc4f0"/><circle cx="20.9" cy="55.6" r="0.90" fill="#4ab0e6"/><circle cx="89.4" cy="18.4" r="0.60" fill="#4ab0e6"/><circle cx="51.9" cy="54.4" r="1.14" fill="#4ab0e6"/><circle cx="83.8" cy="41.1" r="0.53" fill="#4ab0e6"/><circle cx="38.6" cy="33.1" r="0.95" fill="#8fdcff"/><circle cx="81.6" cy="62.4" r="0.79" fill="#4ab0e6"/><circle cx="66.9" cy="44.1" r="0.82" fill="#bfeaff"/><circle cx="31.5" cy="44.2" r="1.03" fill="#5fc4f0"/><circle cx="15.7" cy="68.9" r="1.09" fill="#3a9ad8"/><circle cx="31.2" cy="29.8" r="0.76" fill="#8fdcff"/><circle cx="102.7" cy="45" r="1.10" fill="#5fc4f0"/><circle cx="102.1" cy="52.1" r="0.52" fill="#8fdcff"/><circle cx="47.4" cy="30.8" r="1.03" fill="#5fc4f0"/><circle cx="39" cy="51.2" r="0.70" fill="#5fc4f0"/><circle cx="56.3" cy="35.2" r="1.16" fill="#bfeaff"/><circle cx="58" cy="36.5" r="0.86" fill="#2f7fc4"/><circle cx="27.9" cy="46.5" r="0.79" fill="#8fdcff"/><circle cx="31" cy="28.2" r="0.86" fill="#4ab0e6"/><circle cx="111" cy="21.2" r="0.69" fill="#bfeaff"/><circle cx="89.6" cy="37.1" r="0.58" fill="#5fc4f0"/><circle cx="38.9" cy="30.3" r="1.15" fill="#3a9ad8"/><circle cx="54.1" cy="49.3" r="0.53" fill="#3a9ad8"/><circle cx="83.7" cy="31.5" r="1.22" fill="#4ab0e6"/><circle cx="5" cy="23" r="0.66" fill="#3a9ad8"/><circle cx="81.6" cy="24.9" r="0.86" fill="#3a9ad8"/><circle cx="97.8" cy="54.3" r="0.78" fill="#2f7fc4"/><circle cx="82.2" cy="68.9" r="0.55" fill="#2f7fc4"/><circle cx="91.7" cy="48.8" r="0.69" fill="#5fc4f0"/><circle cx="33.4" cy="60.3" r="0.54" fill="#bfeaff"/><circle cx="82.9" cy="43.6" r="0.48" fill="#3a9ad8"/><circle cx="108.2" cy="61" r="0.50" fill="#5fc4f0"/><circle cx="105.6" cy="54.7" r="0.80" fill="#3a9ad8"/><circle cx="68.1" cy="61" r="0.58" fill="#3a9ad8"/><circle cx="38.2" cy="65.7" r="0.90" fill="#bfeaff"/><circle cx="33.8" cy="54.6" r="1.13" fill="#2f7fc4"/><circle cx="81" cy="60.3" r="1.13" fill="#3a9ad8"/><circle cx="95" cy="52.6" r="0.75" fill="#3a9ad8"/><circle cx="95.5" cy="36.8" r="1.25" fill="#2f7fc4"/><circle cx="102.6" cy="63.6" r="0.88" fill="#4ab0e6"/><circle cx="50.6" cy="51.4" r="0.46" fill="#2f7fc4"/><circle cx="52" cy="29.5" r="0.95" fill="#8fdcff"/><circle cx="20.7" cy="52" r="0.54" fill="#2f7fc4"/><circle cx="47.9" cy="50.7" r="0.98" fill="#8fdcff"/><circle cx="65.6" cy="63" r="0.98" fill="#bfeaff"/><circle cx="80.4" cy="44.4" r="0.70" fill="#bfeaff"/><circle cx="39.3" cy="62.8" r="1.13" fill="#8fdcff"/><circle cx="86.4" cy="43.9" r="0.67" fill="#5fc4f0"/><circle cx="53.8" cy="42.2" r="1.24" fill="#8fdcff"/><circle cx="49.7" cy="55.9" r="0.81" fill="#3a9ad8"/><circle cx="81" cy="44.8" r="0.54" fill="#8fdcff"/><circle cx="58" cy="35" r="0.96" fill="#5fc4f0"/><circle cx="45.7" cy="55.4" r="0.59" fill="#2f7fc4"/><circle cx="62.4" cy="49.2" r="0.64" fill="#8fdcff"/><circle cx="68.1" cy="24" r="1.13" fill="#8fdcff"/><circle cx="56.9" cy="15.7" r="0.62" fill="#bfeaff"/><circle cx="56.2" cy="36.4" r="0.48" fill="#2f7fc4"/><circle cx="61.6" cy="61.8" r="1.04" fill="#5fc4f0"/><circle cx="90.5" cy="36.2" r="1.22" fill="#8fdcff"/><circle cx="62.4" cy="20.2" r="0.87" fill="#3a9ad8"/><circle cx="47.8" cy="53.7" r="1.13" fill="#8fdcff"/><circle cx="71.2" cy="29.2" r="1.00" fill="#8fdcff"/><circle cx="45" cy="36.8" r="0.90" fill="#5fc4f0"/><circle cx="85.2" cy="49.6" r="0.98" fill="#2f7fc4"/><circle cx="40.1" cy="36" r="0.56" fill="#4ab0e6"/><circle cx="65.3" cy="32.7" r="0.92" fill="#bfeaff"/><circle cx="48.6" cy="16.5" r="0.63" fill="#2f7fc4"/><circle cx="37" cy="48.4" r="0.51" fill="#3a9ad8"/><circle cx="78.7" cy="60.6" r="0.97" fill="#bfeaff"/><circle cx="42.3" cy="21.3" r="0.83" fill="#bfeaff"/><circle cx="50" cy="63.6" r="0.58" fill="#bfeaff"/><circle cx="71.6" cy="26.8" r="1.13" fill="#2f7fc4"/><circle cx="39.7" cy="33.5" r="0.81" fill="#8fdcff"/><circle cx="43.2" cy="38.9" r="0.94" fill="#5fc4f0"/><circle cx="105.2" cy="11.5" r="0.69" fill="#8fdcff"/><circle cx="90.5" cy="45.6" r="0.67" fill="#8fdcff"/><circle cx="76.5" cy="31" r="0.73" fill="#4ab0e6"/><circle cx="47.9" cy="20.6" r="0.93" fill="#5fc4f0"/><circle cx="19.3" cy="64.3" r="0.83" fill="#5fc4f0"/><circle cx="44.7" cy="43.9" r="1.16" fill="#4ab0e6"/><circle cx="27.2" cy="56.7" r="0.85" fill="#8fdcff"/><circle cx="48" cy="30" r="0.59" fill="#4ab0e6"/><circle cx="7.9" cy="55.9" r="0.99" fill="#4ab0e6"/><circle cx="111.6" cy="31" r="1.14" fill="#4ab0e6"/><circle cx="103" cy="32.9" r="0.98" fill="#bfeaff"/><circle cx="30.3" cy="52.7" r="0.59" fill="#4ab0e6"/><circle cx="78.6" cy="25" r="0.80" fill="#2f7fc4"/><circle cx="39.9" cy="67.1" r="0.52" fill="#8fdcff"/><circle cx="72.4" cy="18.7" r="0.97" fill="#bfeaff"/><circle cx="114.9" cy="44.8" r="0.84" fill="#5fc4f0"/><circle cx="24.6" cy="25.5" r="1.09" fill="#5fc4f0"/><circle cx="69.9" cy="37.5" r="0.80" fill="#2f7fc4"/><circle cx="70.9" cy="50.8" r="0.72" fill="#5fc4f0"/><circle cx="69.2" cy="22.2" r="0.87" fill="#4ab0e6"/><circle cx="65.1" cy="27.5" r="1.23" fill="#8fdcff"/><circle cx="24.4" cy="43.8" r="1.16" fill="#4ab0e6"/><circle cx="38.1" cy="69.1" r="0.70" fill="#bfeaff"/><circle cx="54" cy="43" r="0.89" fill="#8fdcff"/><circle cx="70.3" cy="68.1" r="0.98" fill="#2f7fc4"/><circle cx="34" cy="45.2" r="0.62" fill="#3a9ad8"/><circle cx="36.8" cy="48.8" r="0.64" fill="#8fdcff"/><circle cx="58.3" cy="55.1" r="1.06" fill="#3a9ad8"/><circle cx="79.9" cy="42.7" r="0.83" fill="#bfeaff"/><circle cx="94.6" cy="56.9" r="0.48" fill="#3a9ad8"/><circle cx="30.2" cy="13.5" r="0.80" fill="#5fc4f0"/><circle cx="68.3" cy="21.8" r="0.70" fill="#8fdcff"/><circle cx="73.6" cy="41.3" r="0.79" fill="#4ab0e6"/><circle cx="90.3" cy="43.3" r="1.02" fill="#bfeaff"/><circle cx="59" cy="12.1" r="0.70" fill="#5fc4f0"/><circle cx="46.7" cy="39.6" r="1.18" fill="#4ab0e6"/><circle cx="36.7" cy="38.2" r="0.80" fill="#5fc4f0"/><circle cx="68" cy="42.5" r="0.70" fill="#2f7fc4"/><circle cx="100.6" cy="36.8" r="0.87" fill="#3a9ad8"/><circle cx="98.7" cy="57.3" r="1.25" fill="#4ab0e6"/><circle cx="34" cy="28.7" r="0.99" fill="#4ab0e6"/><circle cx="23.3" cy="46.4" r="0.57" fill="#8fdcff"/><circle cx="81" cy="44.6" r="0.78" fill="#2f7fc4"/><circle cx="101" cy="38.3" r="0.64" fill="#bfeaff"/><circle cx="48.6" cy="61.2" r="0.63" fill="#8fdcff"/><circle cx="38.1" cy="44" r="0.52" fill="#3a9ad8"/><circle cx="98.5" cy="28.8" r="1.24" fill="#3a9ad8"/><circle cx="17.8" cy="53.4" r="1.20" fill="#2f7fc4"/><circle cx="58.4" cy="38.3" r="0.86" fill="#2f7fc4"/><circle cx="77.3" cy="36" r="0.64" fill="#3a9ad8"/><circle cx="102" cy="51" r="0.63" fill="#8fdcff"/><circle cx="37.3" cy="25.3" r="0.81" fill="#8fdcff"/></g>
<rect y="10" width="30" height="20" fill="#2c4a3a" opacity=".18"/><rect x="100" y="14" width="16" height="22" fill="#3f9fe0" opacity=".35"/>
<rect x="10" y="13.6" width="3.4" height="1.6" fill="#e8e8e8"/>
<g font-weight="bold"><text transform="translate(31 43)scale(.6 1)" font-size="11" fill="#2a56cc" textLength="41" lengthAdjust="spacingAndGlyphs">EURO</text><text transform="translate(56.5 43)scale(.6 1)" font-size="11" fill="#e8cf2c" textLength="48.5" lengthAdjust="spacingAndGlyphs">|UKRAINE</text>
<g fill="#e8f0f4" font-size="6.2"><text transform="translate(30.7 52.8)scale(.6 1)" textLength="86" lengthAdjust="spacingAndGlyphs">НАША ЦІЛЬ І ЧЕСТЬ СВЯТИНЯ</text><text transform="translate(36.3 58.8)scale(.6 1)" textLength="69" lengthAdjust="spacingAndGlyphs">ЗБЕРЕГТИ ВІТЧИЗНУ</text><text transform="translate(24.6 65.5)scale(.6 1)" textLength="108" lengthAdjust="spacingAndGlyphs">РІДНУ УКРАЇНУ ДЛЯ ЖИТТЯ...</text></g></g></svg></div>
<div class="thumb" style="left:207px"><svg width="116.4" height="86.4" viewBox="0 0 116 86" preserveAspectRatio="none" font-family="'Liberation Sans',sans-serif"><rect width="116" height="86" fill="#4c4c4e"/>
<path d="M0 0H37L18 48L9 70L0 86Z" fill="#dd1f26"/>
<path d="M77 0H114L96 48L84 86H44L54 53Z" fill="#f0c41c"/>
<path d="M114 0H116V86H84L96 48Z" fill="#3f84b4"/>
<path d="M37 0H77L54 53L44 86H0L9 70L18 48Z" fill="#58585a" opacity=".6"/>
<path d="M3 40L9 46L5 52L14 58L8 70L20 66L16 80H0V40Z" fill="#0c0c0c"/>
<path d="M0 79Q30 76 60 79.5T116 78V86H0Z" fill="#0a0a0a"/><g fill="#0a0a0a"><path d="M20 80l-2.5 -10q.500 -3 2.5 -3.5l.500 -2.5q1.5 -1.5 2.5 0l.300 2.5q2 1 2 4l2.5 10z"/><path d="M21 72l4 -8" stroke="#0a0a0a" stroke-width=".7"/><path d="M27 80l-2.5 -7q.500 -3 2.5 -3.5l.500 -2.5q1.5 -1.5 2.5 0l.300 2.5q2 1 2 4l2.5 7z"/><path d="M28 75l4 -6.5" stroke="#0a0a0a" stroke-width=".7"/><path d="M34 80l-2.5 -12q.500 -3 2.5 -3.5l.500 -2.5q1.5 -1.5 2.5 0l.300 2.5q2 1 2 4l2.5 12z"/><path d="M35 70l4 -9" stroke="#0a0a0a" stroke-width=".7"/><path d="M44 80l-2.5 -8q.500 -3 2.5 -3.5l.500 -2.5q1.5 -1.5 2.5 0l.300 2.5q2 1 2 4l2.5 8z"/><path d="M45 74l4 -7" stroke="#0a0a0a" stroke-width=".7"/><path d="M50 80l-2.5 -14q.500 -3 2.5 -3.5l.500 -2.5q1.5 -1.5 2.5 0l.300 2.5q2 1 2 4l2.5 14z"/><path d="M51 68l4 -10" stroke="#0a0a0a" stroke-width=".7"/><path d="M57 80l-2.5 -9q.500 -3 2.5 -3.5l.500 -2.5q1.5 -1.5 2.5 0l.300 2.5q2 1 2 4l2.5 9z"/><path d="M58 73l4 -7.5" stroke="#0a0a0a" stroke-width=".7"/><path d="M63 80l-2.5 -16q.500 -3 2.5 -3.5l.500 -2.5q1.5 -1.5 2.5 0l.300 2.5q2 1 2 4l2.5 16z"/><path d="M64 66l4 -11" stroke="#0a0a0a" stroke-width=".7"/><path d="M70 80l-2.5 -11q.500 -3 2.5 -3.5l.500 -2.5q1.5 -1.5 2.5 0l.300 2.5q2 1 2 4l2.5 11z"/><path d="M71 71l4 -8.5" stroke="#0a0a0a" stroke-width=".7"/><path d="M78 80l-2.5 -18q.500 -3 2.5 -3.5l.500 -2.5q1.5 -1.5 2.5 0l.300 2.5q2 1 2 4l2.5 18z"/><path d="M79 64l4 -12" stroke="#0a0a0a" stroke-width=".7"/><path d="M84 80l-2.5 -9q.500 -3 2.5 -3.5l.500 -2.5q1.5 -1.5 2.5 0l.300 2.5q2 1 2 4l2.5 9z"/><path d="M85 73l4 -7.5" stroke="#0a0a0a" stroke-width=".7"/><path d="M90 80l-2.5 -6q.500 -3 2.5 -3.5l.500 -2.5q1.5 -1.5 2.5 0l.300 2.5q2 1 2 4l2.5 6z"/><path d="M91 76l4 -6" stroke="#0a0a0a" stroke-width=".7"/></g>
<g fill="none" stroke="#f6f6f6" stroke-width="1.3" stroke-linejoin="round"><path transform="translate(4 9)scale(.9 .85)" d="M0 0V20Q0 27 7 28.5Q5 32 7 36Q9 32 7 28.5Q14 27 14 20V0Q10 4 10.5 14L8.5 14Q8.5 6 7 -2Q5.5 6 5.5 14L3.5 14Q4 4 0 0ZM2 16V21Q2.5 24 5.5 25V16ZM12 16V21Q11.5 24 8.5 25V16Z"/><path transform="translate(99.5 9)scale(.9 .85)" d="M0 0V20Q0 27 7 28.5Q5 32 7 36Q9 32 7 28.5Q14 27 14 20V0Q10 4 10.5 14L8.5 14Q8.5 6 7 -2Q5.5 6 5.5 14L3.5 14Q4 4 0 0ZM2 16V21Q2.5 24 5.5 25V16ZM12 16V21Q11.5 24 8.5 25V16Z"/></g>
<g fill="#fafafa" font-size="31"><text transform="translate(21.5 32.5)scale(.3 1)" textLength="125" lengthAdjust="spacing" stroke="#fafafa" stroke-width="1.2">ГЕРОЯМ</text><text transform="translate(65 32.5)scale(.3 1)" textLength="103" lengthAdjust="spacing" stroke="#fafafa" stroke-width="1.2">СЛАВА</text></g></svg></div>
<div class="thumb" style="left:338.8px"><svg width="116.4" height="86.4" viewBox="0 0 116 86" preserveAspectRatio="none" font-family="'Liberation Sans',sans-serif"><defs><linearGradient id="g78" x1="0" y1="0" x2="0" y2="1"><stop offset="0" stop-color="#2a44a8"/><stop offset="1" stop-color="#2f58c0"/></linearGradient><linearGradient id="g78b" x1="0" y1="0" x2="1" y2="1"><stop offset="0" stop-color="#f4ea20"/><stop offset=".5" stop-color="#e6d410"/><stop offset="1" stop-color="#f6ee38"/></linearGradient></defs>
<rect width="116" height="86" fill="url(#g78)"/>
<path d="M60 42Q76 30 92 34T116 38V86H60Z" fill="url(#g78b)"/>
<path d="M78 44Q90 52 104 46L112 58Q96 62 84 56Z" fill="#cdb80c" opacity=".55"/><path d="M70 66Q90 70 116 60V70Q92 80 72 74Z" fill="#d4c010" opacity=".45"/>
<path d="M0 40Q10 34 22 37T46 38T72 44L84 86H0Z" fill="#d09a28"/>
<path d="M0 62Q30 56 60 64L80 86H0Z" fill="#c08420" opacity=".7"/>
<g fill="none" stroke-width=".8" stroke-linecap="round"><path d="M12.7 55.4q-0.1 -4.5 2.9 -8.9" stroke="#b87818"/><path d="M25.2 82.4q-0.8 -7.3 -0.6 -14.7" stroke="#c88a20"/><path d="M51.1 81.6q1.2 -6.7 -0.1 -13.4" stroke="#f0c040"/><path d="M61.3 78.8q0.1 -5.5 -0.7 -11" stroke="#b87818"/><path d="M32.1 83.5q0 -6.4 -1.8 -12.8" stroke="#f0c040"/><path d="M60.6 81.7q0.8 -5.7 0.4 -11.4" stroke="#f6d860"/><path d="M56.3 58.5q0.2 -4.8 0.8 -9.6" stroke="#c88a20"/><path d="M29.5 53.1q0.2 -4.9 -0.6 -9.8" stroke="#c88a20"/><path d="M60.9 61.6q1.3 -4.7 -0.4 -9.4" stroke="#f0c040"/><path d="M6.8 61.9q-0.1 -7.9 1 -15.7" stroke="#f0c040"/><path d="M39.2 61.4q-0.4 -6.7 -0 -13.4" stroke="#b87818"/><path d="M76.8 51q-0.9 -6.6 2 -13.2" stroke="#f6d860"/><path d="M46.7 43.1q-0.9 -7 1.4 -14" stroke="#f6d860"/><path d="M25.6 50.2q1.6 -4.1 0.8 -8.2" stroke="#f0c040"/><path d="M73.5 71q1.1 -7.6 -0.9 -15.1" stroke="#f0c040"/><path d="M77.1 46.8q-0.1 -6.3 2.4 -12.6" stroke="#e0a830"/><path d="M47.6 72.1q-0.1 -4.6 1.1 -9.1" stroke="#b87818"/><path d="M57.5 53.5q-0.9 -5.1 -0.6 -10.1" stroke="#e0a830"/><path d="M30.9 67.2q-0.2 -7.1 -1.6 -14.2" stroke="#c88a20"/><path d="M8.5 65.9q-0.7 -6.4 -0.2 -12.8" stroke="#f6d860"/><path d="M10.5 80.1q0.1 -4.1 1.8 -8.3" stroke="#f6d860"/><path d="M44.9 43.9q1.4 -7.8 1.1 -15.6" stroke="#f6d860"/><path d="M15.2 83.5q-0.6 -6.8 1.7 -13.7" stroke="#b87818"/><path d="M27.3 44.2q1.3 -7.3 -0.1 -14.5" stroke="#c88a20"/><path d="M10.3 74.5q1.1 -4.9 -0.6 -9.7" stroke="#b87818"/><path d="M0.2 66.3q0.8 -7.2 1.3 -14.3" stroke="#f6d860"/><path d="M45.4 80.9q-0.1 -6 -0.8 -12" stroke="#b87818"/><path d="M42.8 67.2q1.5 -7.6 -1.9 -15.3" stroke="#f6d860"/><path d="M10.8 79.4q1 -6.5 -0.1 -13" stroke="#c88a20"/><path d="M2.9 46.2q1 -5.4 0.5 -10.9" stroke="#b87818"/><path d="M63.7 53.7q-0.6 -5.4 1.6 -10.8" stroke="#b87818"/><path d="M73.6 73.5q-0.4 -6.8 2 -13.5" stroke="#f0c040"/><path d="M41.6 82.9q2 -5.3 -0.3 -10.6" stroke="#b87818"/><path d="M30.4 44q1 -6.7 0.6 -13.5" stroke="#f0c040"/><path d="M5.7 80.8q1.3 -7.7 -0.3 -15.4" stroke="#b87818"/><path d="M18.9 55.7q-0.7 -7.9 1.3 -15.9" stroke="#c88a20"/><path d="M76.1 52.9q1.7 -4.1 1 -8.3" stroke="#b87818"/><path d="M17.2 67.3q0.8 -7.8 -1.9 -15.7" stroke="#f6d860"/><path d="M34.4 47.4q1.4 -7.4 0.5 -14.7" stroke="#e0a830"/><path d="M38.5 59.7q-0.5 -4.3 2 -8.6" stroke="#e0a830"/><path d="M3.3 80.5q0.7 -4.3 2.1 -8.5" stroke="#f0c040"/><path d="M7.5 43.5q0.6 -7.5 -0.8 -14.9" stroke="#f0c040"/><path d="M36 39.2q-0.7 -4.9 1.8 -9.9" stroke="#e0a830"/><path d="M55.4 60.6q1.9 -5.1 0.8 -10.2" stroke="#e0a830"/><path d="M45.9 49.3q1.6 -4.8 -1.4 -9.5" stroke="#c88a20"/><path d="M46.1 68q1.8 -4.1 0.4 -8.1" stroke="#e0a830"/><path d="M1.2 38.9q-0.6 -7 2.6 -14" stroke="#c88a20"/><path d="M20.4 54.5q-0.2 -4.4 -1 -8.9" stroke="#e0a830"/><path d="M50.7 64q-0.4 -6.6 0.2 -13.3" stroke="#e0a830"/><path d="M13 50q1.9 -5.3 2.7 -10.7" stroke="#c88a20"/><path d="M42.8 85.8q1.7 -7.2 2.8 -14.4" stroke="#f0c040"/><path d="M9.5 44q-0.2 -7 2.3 -13.9" stroke="#e0a830"/><path d="M73.7 82.6q1.3 -4.9 -0.8 -9.8" stroke="#b87818"/><path d="M13.7 45.8q0.9 -7.4 -1 -14.7" stroke="#e0a830"/><path d="M51.3 83.4q0.3 -4.2 -0.1 -8.4" stroke="#e0a830"/><path d="M45.4 38.3q1.9 -5.9 1.4 -11.7" stroke="#f6d860"/><path d="M53.5 66.9q1.1 -8 -0.1 -16" stroke="#b87818"/><path d="M60 41.8q0.5 -6.9 2.7 -13.8" stroke="#f6d860"/><path d="M78 85.8q1.7 -7.8 -0.2 -15.6" stroke="#f0c040"/><path d="M33.4 55.7q-0.7 -8 -0.7 -16" stroke="#c88a20"/><path d="M9.9 44.9q-0.8 -7 -0.1 -14" stroke="#c88a20"/><path d="M5.6 82.1q1.6 -6.2 1.6 -12.5" stroke="#f6d860"/><path d="M57 50.8q-0.1 -5.7 2.9 -11.4" stroke="#b87818"/><path d="M34.5 49.8q-0.6 -7.9 2.9 -15.7" stroke="#f0c040"/><path d="M28.7 78.1q0.1 -6 0.3 -12" stroke="#e0a830"/><path d="M32.8 82.4q1.1 -6.4 -1.6 -12.9" stroke="#e0a830"/><path d="M25.9 70q1.7 -7.3 1 -14.5" stroke="#f6d860"/><path d="M30 64.9q-0.9 -6.2 1.3 -12.4" stroke="#c88a20"/><path d="M39.8 38.8q0.9 -6 -0.4 -12" stroke="#f0c040"/><path d="M18.6 68.3q-0.5 -6.2 -1.5 -12.4" stroke="#e0a830"/><path d="M60.3 54.7q-0.6 -6.5 2.4 -13" stroke="#f6d860"/><path d="M20.2 68.2q1.1 -4.7 -1.1 -9.5" stroke="#c88a20"/><path d="M32.9 68.7q0.2 -6.9 0.6 -13.7" stroke="#c88a20"/><path d="M67.6 46.3q-0.4 -7.2 1.9 -14.3" stroke="#f6d860"/><path d="M76.6 48q0.9 -6.8 2.9 -13.7" stroke="#b87818"/><path d="M48 75.1q-0.2 -4 2.2 -8.1" stroke="#b87818"/><path d="M70.3 72.4q1 -5.8 -1.7 -11.6" stroke="#e0a830"/><path d="M54.7 85.5q-0.4 -7.1 1.4 -14.3" stroke="#b87818"/><path d="M27.8 60.1q1.1 -6.3 2.7 -12.7" stroke="#e0a830"/><path d="M11.5 43.1q1.6 -6.7 -0.9 -13.5" stroke="#b87818"/><path d="M72.7 79.2q0.3 -6.7 0.5 -13.4" stroke="#b87818"/><path d="M30.9 60.3q-1 -5.3 3 -10.6" stroke="#b87818"/><path d="M61.2 39.4q0 -7.4 2.4 -14.8" stroke="#e0a830"/><path d="M73.3 41.4q-0.3 -6.5 -1.6 -13" stroke="#b87818"/><path d="M43.3 66.9q-0.3 -7.3 2 -14.6" stroke="#b87818"/><path d="M30.6 46.8q1.6 -7.2 2.6 -14.4" stroke="#f6d860"/><path d="M15.7 63.4q0.9 -4.3 0.2 -8.6" stroke="#e0a830"/><path d="M65.5 44.8q-0.2 -5.1 1.4 -10.1" stroke="#e0a830"/><path d="M48 55.7q-0.6 -6.7 1.3 -13.4" stroke="#b87818"/><path d="M45.1 80q-0 -7.5 -1.4 -15" stroke="#f0c040"/></g>
<g fill="#f4f6fa" stroke="#f4f6fa" stroke-width=".3" font-weight="bold" font-style="italic" font-size="8.8"><text transform="translate(35.2 13.2)scale(.74 1)" textLength="55" lengthAdjust="spacingAndGlyphs">14 ЖОВТНЯ</text><text transform="translate(12.6 26.2)scale(.74 1)" textLength="130" lengthAdjust="spacingAndGlyphs">ДЕНЬ ЗАХИСНИКА УКРАЇНИ</text></g></svg></div>
<div class="thumb" style="left:470.6px"><svg width="116.4" height="86.4" viewBox="0 0 116 86" preserveAspectRatio="none" font-family="'Liberation Sans',sans-serif"><defs><linearGradient id="g79" x1="0" y1="0" x2="1" y2="1"><stop offset="0" stop-color="#421808"/><stop offset=".45" stop-color="#743614"/><stop offset="1" stop-color="#985024"/></linearGradient><clipPath id="c79"><rect x="48" y="8" width="30" height="40"/></clipPath><radialGradient id="g79b" cx=".8" cy=".1" r=".55"><stop offset="0" stop-color="#d0a888"/><stop offset="1" stop-color="#b07850" stop-opacity="0"/></radialGradient></defs>
<rect width="116" height="86" fill="url(#g79)"/><rect width="116" height="86" fill="url(#g79b)"/>
<g fill="none" stroke-linejoin="round" stroke-linecap="round">
<path transform="translate(35 40)rotate(-8)scale(1.020 1.040)" d="M0 -14C-8 -30 -34 -26 -30 -2C-27 14 -8 26 2 36C14 24 30 12 32 -6C33 -28 8 -30 0 -14Z" stroke="#f2c024" stroke-width="6"/>
<path transform="translate(35 40)rotate(-8)scale(1.020 1.040)" d="M0 -14C-8 -30 -34 -26 -30 -2C-27 14 -8 26 2 36C14 24 30 12 32 -6C33 -28 8 -30 0 -14Z" stroke="#fbe07a" stroke-width="1.6" opacity=".7"/>
<path transform="translate(82 41)rotate(9)scale(1.020 1.020)" d="M0 -14C-8 -30 -34 -26 -30 -2C-27 14 -8 26 2 36C14 24 30 12 32 -6C33 -28 8 -30 0 -14Z" stroke="#1f6fd6" stroke-width="7"/>
<path transform="translate(82 41)rotate(9)scale(1.020 1.020)" d="M0 -14C-8 -30 -34 -26 -30 -2C-27 14 -8 26 2 36C14 24 30 12 32 -6C33 -28 8 -30 0 -14Z" stroke="#4a9cf0" stroke-width="2" opacity=".7"/>
<g clip-path="url(#c79)"><path transform="translate(35 40)rotate(-8)scale(1.020 1.040)" d="M0 -14C-8 -30 -34 -26 -30 -2C-27 14 -8 26 2 36C14 24 30 12 32 -6C33 -28 8 -30 0 -14Z" stroke="#f2c024" stroke-width="6"/>
<path transform="translate(35 40)rotate(-8)scale(1.020 1.040)" d="M0 -14C-8 -30 -34 -26 -30 -2C-27 14 -8 26 2 36C14 24 30 12 32 -6C33 -28 8 -30 0 -14Z" stroke="#fbe07a" stroke-width="1.6" opacity=".7"/></g>
</g></svg></div>
<div class="thumb" style="left:602.4px"><svg width="116.4" height="86.4" viewBox="0 0 116 86" preserveAspectRatio="none" font-family="'Liberation Sans',sans-serif"><defs><linearGradient id="g80" x1="0" y1="0" x2="0" y2="1"><stop offset="0" stop-color="#8cc0da"/><stop offset=".28" stop-color="#b9d6c8"/><stop offset=".46" stop-color="#efdc7c"/><stop offset=".7" stop-color="#deb244"/><stop offset="1" stop-color="#cb962e"/></linearGradient><linearGradient id="g80b" x1="0" y1="0" x2="1" y2="0"><stop offset="0" stop-color="#e0aa3c" stop-opacity=".95"/><stop offset=".22" stop-color="#e6b84a" stop-opacity=".8"/><stop offset=".42" stop-color="#e6c060" stop-opacity="0"/></linearGradient><radialGradient id="g80c" cx="1" cy="0" r=".45"><stop offset="0" stop-color="#dca83a" stop-opacity=".95"/><stop offset=".7" stop-color="#dcb04a" stop-opacity=".6"/><stop offset="1" stop-color="#dcb04a" stop-opacity="0"/></radialGradient></defs>
<rect width="116" height="86" fill="url(#g80)"/><rect width="116" height="86" fill="url(#g80b)"/><rect width="116" height="86" fill="url(#g80c)"/>
<g fill="#c98c24" stroke="#8a5410" stroke-width=".5"><ellipse cx="1.1" cy="85.7" rx="6.6" ry="3" transform="rotate(-117 1.1 85.7)"/><path d="M1.1 85.7l-3.6 -20.8" fill="none" stroke="#d9a43a" stroke-width=".45"/><ellipse cx="8.9" cy="86.3" rx="6.6" ry="3" transform="rotate(-53 8.9 86.3)"/><path d="M8.9 86.3l6.6 -20.1" fill="none" stroke="#d9a43a" stroke-width=".45"/><ellipse cx="1.7" cy="77.5" rx="6.6" ry="3" transform="rotate(-117 1.7 77.5)"/><path d="M1.7 77.5l-3.6 -20.8" fill="none" stroke="#d9a43a" stroke-width=".45"/><ellipse cx="9.5" cy="78.1" rx="6.6" ry="3" transform="rotate(-53 9.5 78.1)"/><path d="M9.5 78.1l6.6 -20.1" fill="none" stroke="#d9a43a" stroke-width=".45"/><ellipse cx="2.3" cy="69.3" rx="6.6" ry="3" transform="rotate(-117 2.3 69.3)"/><path d="M2.3 69.3l-3.6 -20.8" fill="none" stroke="#d9a43a" stroke-width=".45"/><ellipse cx="10.1" cy="69.9" rx="6.6" ry="3" transform="rotate(-53 10.1 69.9)"/><path d="M10.1 69.9l6.6 -20.1" fill="none" stroke="#d9a43a" stroke-width=".45"/><ellipse cx="2.9" cy="61.1" rx="6.6" ry="3" transform="rotate(-117 2.9 61.1)"/><path d="M2.9 61.1l-3.6 -20.8" fill="none" stroke="#d9a43a" stroke-width=".45"/><ellipse cx="10.7" cy="61.7" rx="6.6" ry="3" transform="rotate(-53 10.7 61.7)"/><path d="M10.7 61.7l6.6 -20.1" fill="none" stroke="#d9a43a" stroke-width=".45"/><ellipse cx="3.5" cy="52.9" rx="6.6" ry="3" transform="rotate(-117 3.5 52.9)"/><path d="M3.5 52.9l-3.6 -20.8" fill="none" stroke="#d9a43a" stroke-width=".45"/><ellipse cx="11.3" cy="53.5" rx="6.6" ry="3" transform="rotate(-53 11.3 53.5)"/><path d="M11.3 53.5l6.6 -20.1" fill="none" stroke="#d9a43a" stroke-width=".45"/><ellipse cx="4.1" cy="44.7" rx="6.6" ry="3" transform="rotate(-117 4.1 44.7)"/><path d="M4.1 44.7l-3.6 -20.8" fill="none" stroke="#d9a43a" stroke-width=".45"/><ellipse cx="11.9" cy="45.3" rx="6.6" ry="3" transform="rotate(-53 11.9 45.3)"/><path d="M11.9 45.3l6.6 -20.1" fill="none" stroke="#d9a43a" stroke-width=".45"/><ellipse cx="4.7" cy="36.5" rx="6.6" ry="3" transform="rotate(-117 4.7 36.5)"/><path d="M4.7 36.5l-3.6 -20.8" fill="none" stroke="#d9a43a" stroke-width=".45"/><ellipse cx="12.5" cy="37.1" rx="6.6" ry="3" transform="rotate(-53 12.5 37.1)"/><path d="M12.5 37.1l6.6 -20.1" fill="none" stroke="#d9a43a" stroke-width=".45"/><ellipse cx="5.3" cy="28.3" rx="6.6" ry="3" transform="rotate(-117 5.3 28.3)"/><path d="M5.3 28.3l-3.6 -20.8" fill="none" stroke="#d9a43a" stroke-width=".45"/><ellipse cx="13.1" cy="28.9" rx="6.6" ry="3" transform="rotate(-53 13.1 28.9)"/><path d="M13.1 28.9l6.6 -20.1" fill="none" stroke="#d9a43a" stroke-width=".45"/><ellipse cx="5.9" cy="20.1" rx="6.6" ry="3" transform="rotate(-117 5.9 20.1)"/><path d="M5.9 20.1l-3.6 -20.8" fill="none" stroke="#d9a43a" stroke-width=".45"/><ellipse cx="13.7" cy="20.7" rx="6.6" ry="3" transform="rotate(-53 13.7 20.7)"/><path d="M13.7 20.7l6.6 -20.1" fill="none" stroke="#d9a43a" stroke-width=".45"/><ellipse cx="6.5" cy="11.9" rx="6.6" ry="3" transform="rotate(-117 6.5 11.9)"/><path d="M6.5 11.9l-3.6 -20.8" fill="none" stroke="#d9a43a" stroke-width=".45"/><ellipse cx="14.3" cy="12.5" rx="6.6" ry="3" transform="rotate(-53 14.3 12.5)"/><path d="M14.3 12.5l6.6 -20.1" fill="none" stroke="#d9a43a" stroke-width=".45"/><ellipse cx="7.1" cy="3.7" rx="6.6" ry="3" transform="rotate(-117 7.1 3.7)"/><path d="M7.1 3.7l-3.6 -20.8" fill="none" stroke="#d9a43a" stroke-width=".45"/><ellipse cx="14.9" cy="4.3" rx="6.6" ry="3" transform="rotate(-53 14.9 4.3)"/><path d="M14.9 4.3l6.6 -20.1" fill="none" stroke="#d9a43a" stroke-width=".45"/><ellipse cx="18.4" cy="71.5" rx="6" ry="2.7" transform="rotate(-114 18.4 71.5)"/><path d="M18.4 71.5l-2.2 -19.1" fill="none" stroke="#d9a43a" stroke-width=".45"/><ellipse cx="25.6" cy="72.5" rx="6" ry="2.7" transform="rotate(-50 25.6 72.5)"/><path d="M25.6 72.5l7 -17.9" fill="none" stroke="#d9a43a" stroke-width=".45"/><ellipse cx="19.4" cy="63.8" rx="6" ry="2.7" transform="rotate(-114 19.4 63.8)"/><path d="M19.4 63.8l-2.2 -19.1" fill="none" stroke="#d9a43a" stroke-width=".45"/><ellipse cx="26.6" cy="64.7" rx="6" ry="2.7" transform="rotate(-50 26.6 64.7)"/><path d="M26.6 64.7l7 -17.9" fill="none" stroke="#d9a43a" stroke-width=".45"/><ellipse cx="20.4" cy="56" rx="6" ry="2.7" transform="rotate(-114 20.4 56)"/><path d="M20.4 56l-2.2 -19.1" fill="none" stroke="#d9a43a" stroke-width=".45"/><ellipse cx="27.6" cy="56.9" rx="6" ry="2.7" transform="rotate(-50 27.6 56.9)"/><path d="M27.6 56.9l7 -17.9" fill="none" stroke="#d9a43a" stroke-width=".45"/><ellipse cx="21.4" cy="48.2" rx="6" ry="2.7" transform="rotate(-114 21.4 48.2)"/><path d="M21.4 48.2l-2.2 -19.1" fill="none" stroke="#d9a43a" stroke-width=".45"/><ellipse cx="28.6" cy="49.1" rx="6" ry="2.7" transform="rotate(-50 28.6 49.1)"/><path d="M28.6 49.1l7 -17.9" fill="none" stroke="#d9a43a" stroke-width=".45"/><ellipse cx="22.4" cy="40.4" rx="6" ry="2.7" transform="rotate(-114 22.4 40.4)"/><path d="M22.4 40.4l-2.2 -19.1" fill="none" stroke="#d9a43a" stroke-width=".45"/><ellipse cx="29.6" cy="41.3" rx="6" ry="2.7" transform="rotate(-50 29.6 41.3)"/><path d="M29.6 41.3l7 -17.9" fill="none" stroke="#d9a43a" stroke-width=".45"/><ellipse cx="23.4" cy="32.7" rx="6" ry="2.7" transform="rotate(-114 23.4 32.7)"/><path d="M23.4 32.7l-2.2 -19.1" fill="none" stroke="#d9a43a" stroke-width=".45"/><ellipse cx="30.6" cy="33.6" rx="6" ry="2.7" transform="rotate(-50 30.6 33.6)"/><path d="M30.6 33.6l7 -17.9" fill="none" stroke="#d9a43a" stroke-width=".45"/><ellipse cx="24.4" cy="24.9" rx="6" ry="2.7" transform="rotate(-114 24.4 24.9)"/><path d="M24.4 24.9l-2.2 -19.1" fill="none" stroke="#d9a43a" stroke-width=".45"/><ellipse cx="31.6" cy="25.8" rx="6" ry="2.7" transform="rotate(-50 31.6 25.8)"/><path d="M31.6 25.8l7 -17.9" fill="none" stroke="#d9a43a" stroke-width=".45"/><ellipse cx="25.4" cy="17.1" rx="6" ry="2.7" transform="rotate(-114 25.4 17.1)"/><path d="M25.4 17.1l-2.2 -19.1" fill="none" stroke="#d9a43a" stroke-width=".45"/><ellipse cx="32.6" cy="18" rx="6" ry="2.7" transform="rotate(-50 32.6 18)"/><path d="M32.6 18l7 -17.9" fill="none" stroke="#d9a43a" stroke-width=".45"/><ellipse cx="26.4" cy="9.3" rx="6" ry="2.7" transform="rotate(-114 26.4 9.3)"/><path d="M26.4 9.3l-2.2 -19.1" fill="none" stroke="#d9a43a" stroke-width=".45"/><ellipse cx="33.6" cy="10.2" rx="6" ry="2.7" transform="rotate(-50 33.6 10.2)"/><path d="M33.6 10.2l7 -17.9" fill="none" stroke="#d9a43a" stroke-width=".45"/><ellipse cx="27.4" cy="1.5" rx="6" ry="2.7" transform="rotate(-114 27.4 1.5)"/><path d="M27.4 1.5l-2.2 -19.1" fill="none" stroke="#d9a43a" stroke-width=".45"/><ellipse cx="34.6" cy="2.5" rx="6" ry="2.7" transform="rotate(-50 34.6 2.5)"/><path d="M34.6 2.5l7 -17.9" fill="none" stroke="#d9a43a" stroke-width=".45"/><ellipse cx="96.7" cy="-4" rx="5.6" ry="2.5" transform="rotate(21 96.7 -4)"/><path d="M96.7 -4l13.8 11.5" fill="none" stroke="#d9a43a" stroke-width=".45"/><ellipse cx="91.3" cy="-0" rx="5.6" ry="2.5" transform="rotate(85 91.3 -0)"/><path d="M91.3 -0l6.8 16.6" fill="none" stroke="#d9a43a" stroke-width=".45"/><ellipse cx="101.1" cy="2" rx="5.6" ry="2.5" transform="rotate(21 101.1 2)"/><path d="M101.1 2l13.8 11.5" fill="none" stroke="#d9a43a" stroke-width=".45"/><ellipse cx="95.7" cy="6" rx="5.6" ry="2.5" transform="rotate(85 95.7 6)"/><path d="M95.7 6l6.8 16.6" fill="none" stroke="#d9a43a" stroke-width=".45"/><ellipse cx="105.5" cy="8" rx="5.6" ry="2.5" transform="rotate(21 105.5 8)"/><path d="M105.5 8l13.8 11.5" fill="none" stroke="#d9a43a" stroke-width=".45"/><ellipse cx="100.1" cy="12" rx="5.6" ry="2.5" transform="rotate(85 100.1 12)"/><path d="M100.1 12l6.8 16.6" fill="none" stroke="#d9a43a" stroke-width=".45"/><ellipse cx="109.9" cy="14" rx="5.6" ry="2.5" transform="rotate(21 109.9 14)"/><path d="M109.9 14l13.8 11.5" fill="none" stroke="#d9a43a" stroke-width=".45"/><ellipse cx="104.5" cy="18" rx="5.6" ry="2.5" transform="rotate(85 104.5 18)"/><path d="M104.5 18l6.8 16.6" fill="none" stroke="#d9a43a" stroke-width=".45"/><ellipse cx="114.3" cy="20" rx="5.6" ry="2.5" transform="rotate(21 114.3 20)"/><path d="M114.3 20l13.8 11.5" fill="none" stroke="#d9a43a" stroke-width=".45"/><ellipse cx="108.9" cy="24" rx="5.6" ry="2.5" transform="rotate(85 108.9 24)"/><path d="M108.9 24l6.8 16.6" fill="none" stroke="#d9a43a" stroke-width=".45"/><ellipse cx="118.7" cy="26" rx="5.6" ry="2.5" transform="rotate(21 118.7 26)"/><path d="M118.7 26l13.8 11.5" fill="none" stroke="#d9a43a" stroke-width=".45"/><ellipse cx="113.3" cy="30" rx="5.6" ry="2.5" transform="rotate(85 113.3 30)"/><path d="M113.3 30l6.8 16.6" fill="none" stroke="#d9a43a" stroke-width=".45"/><ellipse cx="108.4" cy="-6.4" rx="5.6" ry="2.5" transform="rotate(13 108.4 -6.4)"/><path d="M108.4 -6.4l15.4 9.2" fill="none" stroke="#d9a43a" stroke-width=".45"/><ellipse cx="103.6" cy="-1.6" rx="5.6" ry="2.5" transform="rotate(77 103.6 -1.6)"/><path d="M103.6 -1.6l9.2 15.4" fill="none" stroke="#d9a43a" stroke-width=".45"/><ellipse cx="114.4" cy="-0.4" rx="5.6" ry="2.5" transform="rotate(13 114.4 -0.4)"/><path d="M114.4 -0.4l15.4 9.2" fill="none" stroke="#d9a43a" stroke-width=".45"/><ellipse cx="109.6" cy="4.4" rx="5.6" ry="2.5" transform="rotate(77 109.6 4.4)"/><path d="M109.6 4.4l9.2 15.4" fill="none" stroke="#d9a43a" stroke-width=".45"/><ellipse cx="120.4" cy="5.6" rx="5.6" ry="2.5" transform="rotate(13 120.4 5.6)"/><path d="M120.4 5.6l15.4 9.2" fill="none" stroke="#d9a43a" stroke-width=".45"/><ellipse cx="115.6" cy="10.4" rx="5.6" ry="2.5" transform="rotate(77 115.6 10.4)"/><path d="M115.6 10.4l9.2 15.4" fill="none" stroke="#d9a43a" stroke-width=".45"/></g>
<g font-weight="bold" stroke-linejoin="round"><text transform="translate(65.5 47.8)scale(.62 1)" font-size="23.5" fill="#1b9fd4" stroke="#0e6fa0" stroke-width=".5" textLength="82" lengthAdjust="spacingAndGlyphs">ЄДИНА</text><text transform="translate(67.5 65.2)scale(.6 1)" font-size="20" fill="#f1f01e" stroke="#8a8a10" stroke-width=".9" paint-order="stroke" textLength="81" lengthAdjust="spacingAndGlyphs">КРАЇНА</text></g></svg></div>
<div class="abs" style="left:730.5px;top:368.9px;width:124.4px;height:94.8px;border:2.6px solid #cf6428;border-radius:1px"></div>
<div class="thumb" style="left:734.2px"><svg width="116.4" height="86.4" viewBox="0 0 116 86" preserveAspectRatio="none" font-family="'Liberation Sans',sans-serif"><rect width="116" height="86" fill="#f3ea9c"/><rect width="116" height="42.5" fill="#9cc5e8"/>
<g transform="translate(-21.230 -19.340)scale(.27156 .2690)"><use href="#mapd" fill="#5b99d2" clip-path="url(#cpt)"/><use href="#mapd" fill="#eede6c" clip-path="url(#cpb)"/><use href="#flor" stroke-width="2.2"/></g>
<g fill="#1a1c3a" font-family="'Liberation Serif',serif" font-style="italic" font-size="9.5"><text x="11" y="37.5" textLength="95" lengthAdjust="spacing"><tspan font-size="14">Ч</tspan>ужого не треба,</text><text x="20" y="51.5" textLength="77" lengthAdjust="spacing">своє не віддам!</text>
<text x="11" y="83" font-size="3.2" textLength="93" lengthAdjust="spacing" fill="#55553a">I dont's need someone else's, I won't give what belongs to me!</text></g></svg></div>
<span class="tn" style="left:78px">76</span><span class="tn" style="left:209.8px">77</span><span class="tn" style="left:341.6px">78</span><span class="tn" style="left:473.4px">79</span><span class="tn" style="left:605.2px">80</span><span class="tn" style="left:737.7px;color:#d0672c">81</span>
<!--THUMBS-END-->
</div>

<!-- SIDE PANEL -->
<div id="side">
  <!--TILES-START-->
<div class="tile" style="left:3.1px;top:5px;background:linear-gradient(120deg,#e6eaf8,#dfe9f5 50%,#e6e4f6);border:1.9px solid #5d61c0;height:58.2px;top:4.7px"><div class="av" style="left:21.6px;top:11.4px;background:#fbe4c9;color:#85572a"><span>ЛВ</span></div></div>
<div class="tile" style="left:84.3px;top:5px;background:linear-gradient(120deg,#f1eef4,#ededf3 60%,#f4f1ee)"><div class="av"><svg width="32.6" height="32.6" viewBox="0 0 32 32" style="display:block"><defs><filter id="blp1" x="-20%" y="-20%" width="140%" height="140%"><feGaussianBlur stdDeviation="1.2"/></filter></defs><rect width="32" height="32" fill="#4c3228"/><g filter="url(#blp1)"><ellipse cx="6" cy="14" rx="5" ry="11" fill="#a88060"/><ellipse cx="26" cy="17" rx="8" ry="15" fill="#33201a"/><ellipse cx="16" cy="3" rx="9" ry="4" fill="#5a3a2c"/><ellipse cx="17.5" cy="11" rx="5.5" ry="6.5" fill="#c9977e"/><path d="M9 17Q14 14 19 19L24 33H13Z" fill="#d6a27e"/><ellipse cx="8" cy="29" rx="8" ry="4.5" fill="#8e9384"/><ellipse cx="11" cy="20" rx="3" ry="4" fill="#6a4636"/></g></svg></div><div class="mic"><svg width="10" height="10.5" viewBox="0 0 10 10.5"><rect x="3.6" y=".8" width="2.8" height="5.4" rx="1.4" fill="#f2f2f2"/><path d="M2.2 4.8Q2.2 7.7 5 7.7Q7.8 7.7 7.8 4.8M5 7.7V9.6" fill="none" stroke="#f2f2f2" stroke-width=".8" stroke-linecap="round"/><path d="M1.4 1L8.6 9.4" stroke="#6f7373" stroke-width="1.8"/><path d="M1.4 1L8.6 9.4" stroke="#f2f2f2" stroke-width=".8" stroke-linecap="round"/></svg></div></div>
<div class="tile" style="left:3.1px;top:65.6px;background:linear-gradient(160deg,#f8f4f2,#eef3f2 55%,#e3f1f4)"><div class="av" style="background:#f8d2d5;color:#8a2a38"><span>КА</span></div><div class="mic"><svg width="10" height="10.5" viewBox="0 0 10 10.5"><rect x="3.6" y=".8" width="2.8" height="5.4" rx="1.4" fill="#f2f2f2"/><path d="M2.2 4.8Q2.2 7.7 5 7.7Q7.8 7.7 7.8 4.8M5 7.7V9.6" fill="none" stroke="#f2f2f2" stroke-width=".8" stroke-linecap="round"/><path d="M1.4 1L8.6 9.4" stroke="#6f7373" stroke-width="1.8"/><path d="M1.4 1L8.6 9.4" stroke="#f2f2f2" stroke-width=".8" stroke-linecap="round"/></svg></div></div>
<div class="tile" style="left:84.3px;top:65.6px;background:linear-gradient(150deg,#fbe6e6,#f7e6ea 50%,#ebe6f6)"><div class="av" style="background:#f7d3c9;color:#7c2c22"><span>НМ</span></div><div class="mic"><svg width="10" height="10.5" viewBox="0 0 10 10.5"><rect x="3.6" y=".8" width="2.8" height="5.4" rx="1.4" fill="#f2f2f2"/><path d="M2.2 4.8Q2.2 7.7 5 7.7Q7.8 7.7 7.8 4.8M5 7.7V9.6" fill="none" stroke="#f2f2f2" stroke-width=".8" stroke-linecap="round"/><path d="M1.4 1L8.6 9.4" stroke="#6f7373" stroke-width="1.8"/><path d="M1.4 1L8.6 9.4" stroke="#f2f2f2" stroke-width=".8" stroke-linecap="round"/></svg></div></div>
<div class="tile" style="left:3.1px;top:126.2px;background:linear-gradient(150deg,#f3eff4,#eceef8 60%,#e9f0f6)"><div class="av"><svg width="32.6" height="32.6" viewBox="0 0 32 32" style="display:block"><defs><filter id="blp2" x="-20%" y="-20%" width="140%" height="140%"><feGaussianBlur stdDeviation="0.9"/></filter></defs><rect width="32" height="32" fill="#2c3a34"/><g filter="url(#blp2)"><rect x="-2" y="-2" width="22" height="30" fill="#2f5a3c"/><rect x="6" y="-2" width="16" height="9" fill="#3a3c44"/><path d="M20 -2H36V34H24Q26 20 20 6Z" fill="#a31a2a"/><circle cx="8" cy="9" r="1.5" fill="#9fc0a0"/><circle cx="13" cy="13" r="1.3" fill="#b8d0b0"/><circle cx="5" cy="17" r="1.6" fill="#a8c8a8"/><path d="M7 33Q7 18 13 17Q18 17 19 25L25 26Q27 27 27 33Z" fill="#dcdfda"/><circle cx="13.5" cy="14.5" r="3.2" fill="#e3c5ae"/><circle cx="20" cy="19" r="2.8" fill="#dcb8a4"/><ellipse cx="13.5" cy="12.5" rx="3.2" ry="1.8" fill="#d8c8a8"/></g></svg></div><div class="mic"><svg width="10" height="10.5" viewBox="0 0 10 10.5"><rect x="3.6" y=".8" width="2.8" height="5.4" rx="1.4" fill="#f2f2f2"/><path d="M2.2 4.8Q2.2 7.7 5 7.7Q7.8 7.7 7.8 4.8M5 7.7V9.6" fill="none" stroke="#f2f2f2" stroke-width=".8" stroke-linecap="round"/><path d="M1.4 1L8.6 9.4" stroke="#6f7373" stroke-width="1.8"/><path d="M1.4 1L8.6 9.4" stroke="#f2f2f2" stroke-width=".8" stroke-linecap="round"/></svg></div></div>
<div class="tile" style="left:84.3px;top:126.2px;background:linear-gradient(130deg,#f7eef4,#eeecf8 55%,#e6eefa)"><div class="av" style="background:#c9ddf3;color:#1c3866"><span>ГО</span></div><div class="mic"><svg width="10" height="10.5" viewBox="0 0 10 10.5"><rect x="3.6" y=".8" width="2.8" height="5.4" rx="1.4" fill="#f2f2f2"/><path d="M2.2 4.8Q2.2 7.7 5 7.7Q7.8 7.7 7.8 4.8M5 7.7V9.6" fill="none" stroke="#f2f2f2" stroke-width=".8" stroke-linecap="round"/><path d="M1.4 1L8.6 9.4" stroke="#6f7373" stroke-width="1.8"/><path d="M1.4 1L8.6 9.4" stroke="#f2f2f2" stroke-width=".8" stroke-linecap="round"/></svg></div></div>
<div class="tile" style="left:3.1px;top:186.8px;background:linear-gradient(140deg,#f8ecf2,#f1eaf4 55%,#eceaf8)"><div class="av" style="background:#c9d9f1;color:#25387a"><span>ШВ</span></div><div class="mic"><svg width="10" height="10.5" viewBox="0 0 10 10.5"><rect x="3.6" y=".8" width="2.8" height="5.4" rx="1.4" fill="#f2f2f2"/><path d="M2.2 4.8Q2.2 7.7 5 7.7Q7.8 7.7 7.8 4.8M5 7.7V9.6" fill="none" stroke="#f2f2f2" stroke-width=".8" stroke-linecap="round"/><path d="M1.4 1L8.6 9.4" stroke="#6f7373" stroke-width="1.8"/><path d="M1.4 1L8.6 9.4" stroke="#f2f2f2" stroke-width=".8" stroke-linecap="round"/></svg></div></div>
<div class="tile" style="left:84.3px;top:186.8px;background:linear-gradient(120deg,#f8f2e8,#fbf6e4 50%,#f6f4ee)"><div class="av" style="background:#eadad6;color:#4a2c2a"><span>СС</span></div><div class="mic"><svg width="10" height="10.5" viewBox="0 0 10 10.5"><rect x="3.6" y=".8" width="2.8" height="5.4" rx="1.4" fill="#f2f2f2"/><path d="M2.2 4.8Q2.2 7.7 5 7.7Q7.8 7.7 7.8 4.8M5 7.7V9.6" fill="none" stroke="#f2f2f2" stroke-width=".8" stroke-linecap="round"/><path d="M1.4 1L8.6 9.4" stroke="#6f7373" stroke-width="1.8"/><path d="M1.4 1L8.6 9.4" stroke="#f2f2f2" stroke-width=".8" stroke-linecap="round"/></svg></div></div>
<div class="tile" style="left:3.1px;top:247.4px;background:linear-gradient(140deg,#f6e8ee,#f8e4ea 50%,#efe8f2)"><div class="av"><svg width="32.6" height="32.6" viewBox="0 0 32 32" style="display:block"><defs><filter id="blp3" x="-20%" y="-20%" width="140%" height="140%"><feGaussianBlur stdDeviation="1.1"/></filter></defs><rect width="32" height="32" fill="#3a2a26"/><g filter="url(#blp3)"><path d="M-2 -2H24L30 10L0 18Z" fill="#bcc4bc"/><path d="M-2 16Q10 8 22 6Q32 8 33 18L30 34H18L-2 30Z" fill="#2a1b18"/><ellipse cx="20.5" cy="16" rx="5.5" ry="7" transform="rotate(35 20.5 16)" fill="#dab4a2"/><ellipse cx="14" cy="24" rx="4" ry="3" fill="#d0a89a"/><path d="M26 22L33 18V34H22Z" fill="#b0b8b0"/><ellipse cx="8" cy="26" rx="6" ry="5" fill="#241614"/></g></svg></div><div class="mic"><svg width="10" height="10.5" viewBox="0 0 10 10.5"><rect x="3.6" y=".8" width="2.8" height="5.4" rx="1.4" fill="#f2f2f2"/><path d="M2.2 4.8Q2.2 7.7 5 7.7Q7.8 7.7 7.8 4.8M5 7.7V9.6" fill="none" stroke="#f2f2f2" stroke-width=".8" stroke-linecap="round"/><path d="M1.4 1L8.6 9.4" stroke="#6f7373" stroke-width="1.8"/><path d="M1.4 1L8.6 9.4" stroke="#f2f2f2" stroke-width=".8" stroke-linecap="round"/></svg></div></div>
<div class="tile" style="left:84.3px;top:247.4px;background:linear-gradient(140deg,#e2eaf3,#e8eef4 55%,#eef0ee)"><div class="av"><svg width="32.6" height="32.6" viewBox="0 0 32 32" style="display:block"><defs><filter id="blp4" x="-20%" y="-20%" width="140%" height="140%"><feGaussianBlur stdDeviation="1.0"/></filter></defs><rect width="32" height="32" fill="#7a7068"/><g filter="url(#blp4)"><rect x="-2" y="-2" width="16" height="36" fill="#9c9084"/><rect x="14" y="-2" width="20" height="14" fill="#4a382e"/><rect x="22" y="10" width="12" height="16" fill="#6c726a"/><ellipse cx="18.5" cy="12.5" rx="4" ry="3" fill="#a87a52"/><ellipse cx="18.5" cy="16.5" rx="3.6" ry="4" fill="#e8cab8"/><path d="M10 34Q11 22 18 21Q26 22 27 34Z" fill="#e2cade"/></g></svg></div><div class="mic"><svg width="10" height="10.5" viewBox="0 0 10 10.5"><rect x="3.6" y=".8" width="2.8" height="5.4" rx="1.4" fill="#f2f2f2"/><path d="M2.2 4.8Q2.2 7.7 5 7.7Q7.8 7.7 7.8 4.8M5 7.7V9.6" fill="none" stroke="#f2f2f2" stroke-width=".8" stroke-linecap="round"/><path d="M1.4 1L8.6 9.4" stroke="#6f7373" stroke-width="1.8"/><path d="M1.4 1L8.6 9.4" stroke="#f2f2f2" stroke-width=".8" stroke-linecap="round"/></svg></div></div>
<div class="tile" style="left:3.1px;top:308px;background:linear-gradient(150deg,#fbf1ec,#f6eef0 55%,#eeeef6)"><div class="av" style="background:#c6d6f1;color:#1f3a7c"><span>ЗВ</span></div><div class="mic"><svg width="10" height="10.5" viewBox="0 0 10 10.5"><rect x="3.6" y=".8" width="2.8" height="5.4" rx="1.4" fill="#f2f2f2"/><path d="M2.2 4.8Q2.2 7.7 5 7.7Q7.8 7.7 7.8 4.8M5 7.7V9.6" fill="none" stroke="#f2f2f2" stroke-width=".8" stroke-linecap="round"/><path d="M1.4 1L8.6 9.4" stroke="#6f7373" stroke-width="1.8"/><path d="M1.4 1L8.6 9.4" stroke="#f2f2f2" stroke-width=".8" stroke-linecap="round"/></svg></div></div>
<div class="tile" style="left:84.3px;top:308px;background:linear-gradient(140deg,#f5f6ee,#f1f3f2 55%,#eaeef6)"><div class="av" style="background:#c9d9f1;color:#1f3a7c"><span>КВ</span></div><div class="mic"><svg width="10" height="10.5" viewBox="0 0 10 10.5"><rect x="3.6" y=".8" width="2.8" height="5.4" rx="1.4" fill="#f2f2f2"/><path d="M2.2 4.8Q2.2 7.7 5 7.7Q7.8 7.7 7.8 4.8M5 7.7V9.6" fill="none" stroke="#f2f2f2" stroke-width=".8" stroke-linecap="round"/><path d="M1.4 1L8.6 9.4" stroke="#6f7373" stroke-width="1.8"/><path d="M1.4 1L8.6 9.4" stroke="#f2f2f2" stroke-width=".8" stroke-linecap="round"/></svg></div></div>
<svg class="abs" style="left:62px;top:372.5px" width="44" height="12" viewBox="0 0 44 12"><path d="M5.6 2L2 6L5.6 10" fill="none" stroke="#c4c4c4" stroke-width="1.1" stroke-linecap="round" stroke-linejoin="round"/><path d="M36.5 2L40.1 6L36.5 10" fill="none" stroke="#5a5a5a" stroke-width="1.1" stroke-linecap="round" stroke-linejoin="round"/><text x="14.6" y="9.4" font-family="'Liberation Sans',sans-serif" font-size="9.4" fill="#4a4a4a" textLength="12.5" lengthAdjust="spacingAndGlyphs">1/7</text></svg>
<div class="tile" style="left:3.1px;top:391.7px;width:159.5px;height:92px;background:linear-gradient(100deg,#f7e9ec,#f9f1f0 35%,#f6f2f2 60%,#f0ecf4)"><div class="abs" style="left:56.9px;top:22.2px;width:44px;height:44px;border-radius:50%;overflow:hidden;background:#fbfbfb"><svg width="44" height="44" viewBox="0 0 44 44" style="display:block"><defs><filter id="blb" x="-20%" y="-20%" width="140%" height="140%"><feGaussianBlur stdDeviation=".9"/></filter></defs><g filter="url(#blb)"><path d="M6 16L3 22L5 30L10 35L9 28L14 38L18 41L16 34L22 30L30 36L27 41L35 36L33 30L40 31L41 22L37 18L40 12L34 10L30 4L26 7L20 3L16 8L10 7L11 13Z" fill="#141414"/><circle cx="4" cy="27" r="1.2" fill="#222"/><circle cx="39" cy="34" r="1" fill="#222"/><path d="M12 42Q12 25 22 24Q32 25 33 42Z" fill="#f6f6f6"/><path d="M17 13Q22 6 27 13L28.5 23L25 26H19L15.5 23Z" fill="#c4703e"/><ellipse cx="22" cy="17.5" rx="3" ry="4" fill="#f0ccb6"/><path d="M17 40H27V43H17Z" fill="#8a8a8a" opacity=".6"/></g><circle cx="22" cy="21" r="13.5" fill="none" stroke="#c8c8c8" stroke-width=".7" opacity=".8"/></svg></div><div class="mic" style="left:5.7px;top:67.5px;height:16px"><svg width="10" height="10.5" viewBox="0 0 10 10.5"><rect x="3.6" y=".8" width="2.8" height="5.4" rx="1.4" fill="#f2f2f2"/><path d="M2.2 4.8Q2.2 7.7 5 7.7Q7.8 7.7 7.8 4.8M5 7.7V9.6" fill="none" stroke="#f2f2f2" stroke-width=".8" stroke-linecap="round"/><path d="M1.4 1L8.6 9.4" stroke="#6f7373" stroke-width="1.8"/><path d="M1.4 1L8.6 9.4" stroke="#f2f2f2" stroke-width=".8" stroke-linecap="round"/></svg></div></div>
<!--TILES-END-->
</div>
</body>
</html>
